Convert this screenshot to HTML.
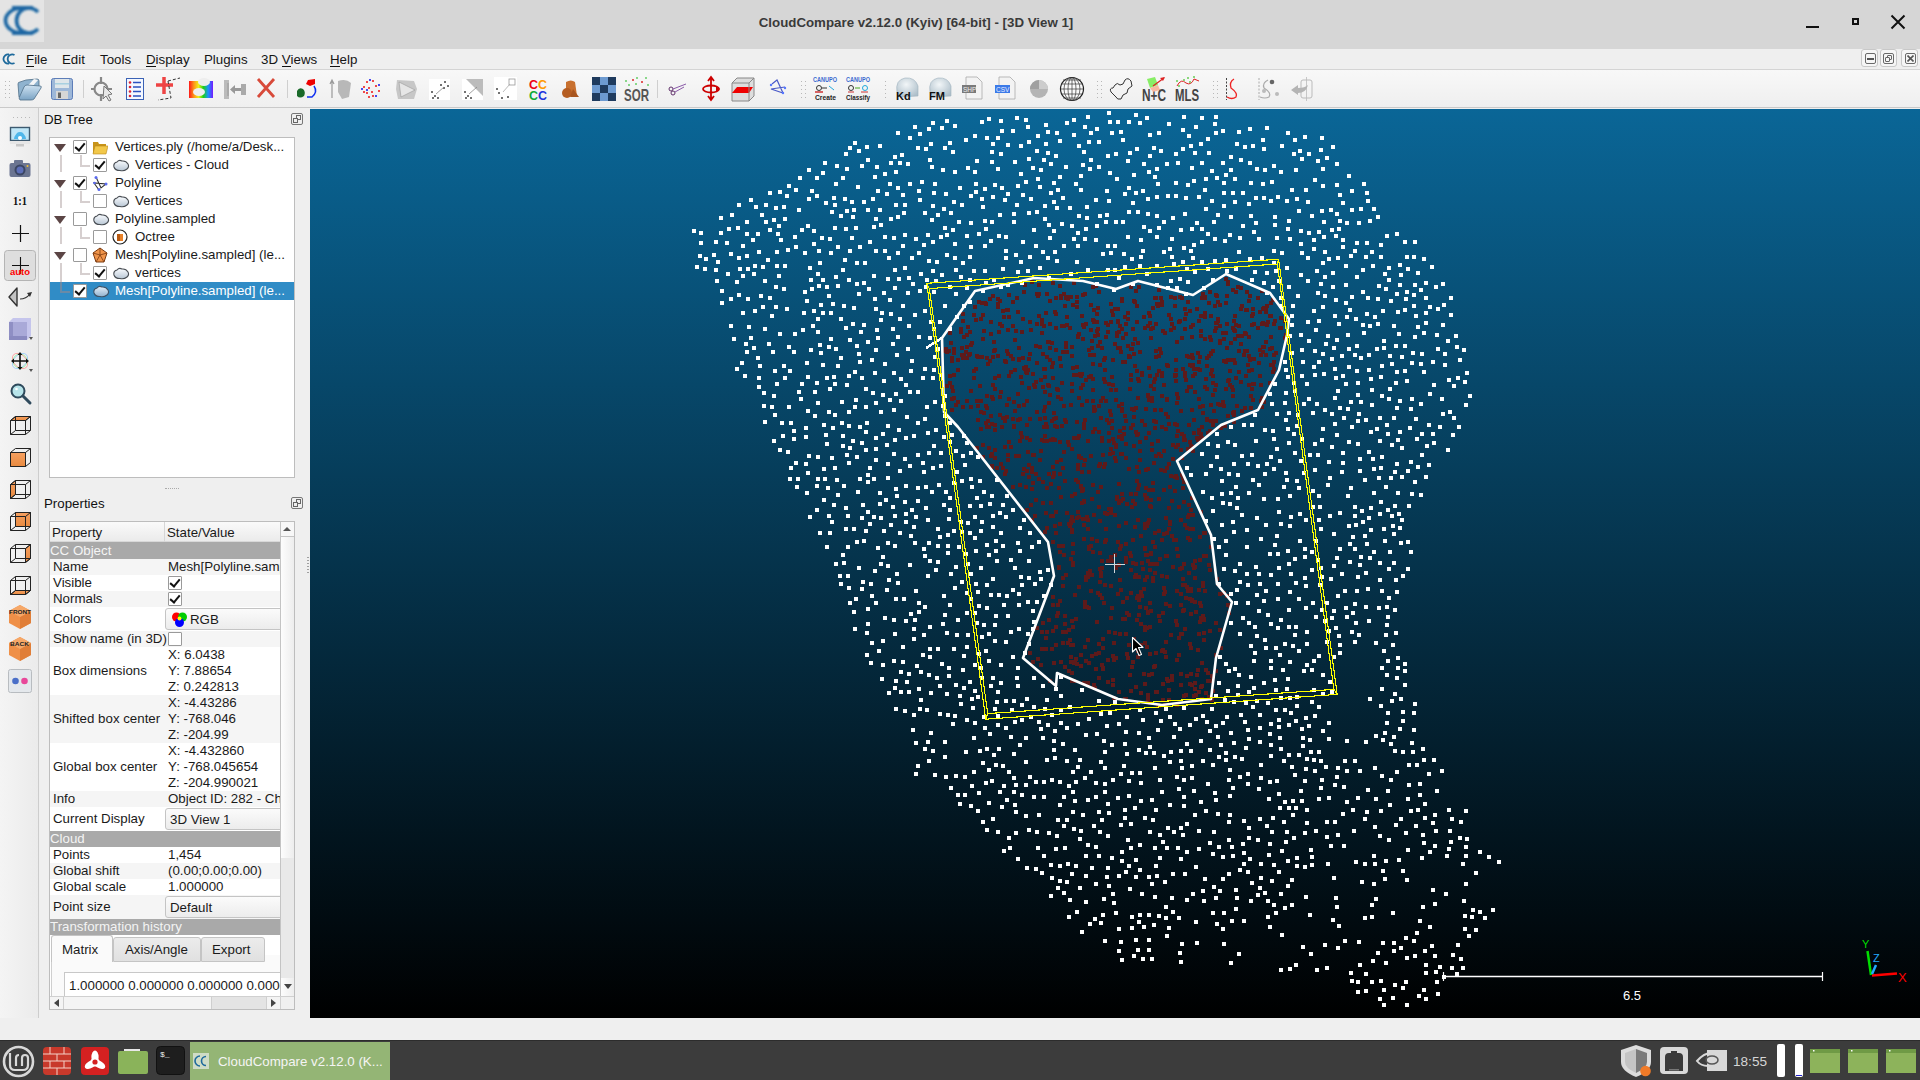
<!DOCTYPE html>
<html><head><meta charset="utf-8">
<style>
*{box-sizing:border-box;margin:0;padding:0}
html,body{width:1920px;height:1080px;overflow:hidden;background:#efefef;font-family:"Liberation Sans",sans-serif;font-size:13.3px;color:#1a1a1a}
div,span,svg{position:absolute}
#title{left:0;top:0;width:1920px;height:49px;background:#d6d6d6}
#ttext{left:0;width:1832px;top:15px;text-align:center;font-weight:bold;font-size:13.3px;color:#3a3a3a;letter-spacing:0}
#menubar{left:0;top:49px;width:1920px;height:21px;background:#efefef;border-bottom:1px solid #d4d4d4}
#menubar span{top:3px;color:#151515}
u{text-decoration:none;border-bottom:1px solid #111;line-height:12px;display:inline-block}
#toolbar{left:0;top:70px;width:1920px;height:38px;background:linear-gradient(#f8f8f8,#efefef);border-bottom:1px solid #c9c9c9}
#lefttb{left:0;top:108px;width:39px;height:910px;background:linear-gradient(90deg,#f4f4f4,#ebebeb);border-right:1px solid #cdcdcd}
#panel{left:40px;top:108px;width:270px;height:910px;background:#efefef}
#view{left:310px;top:109px;width:1610px;height:909px;background:linear-gradient(#0a6697,#000);overflow:hidden}
#status{left:0;top:1018px;width:1920px;height:22px;background:#efefef}
#taskbar{left:0;top:1040px;width:1920px;height:40px;background:#3c3c3c}
.tree{left:9px;top:29px;width:246px;height:341px;background:#fff;border:1px solid #bdbdbd}
.row{left:0;width:244px;height:18px;line-height:18px;white-space:nowrap}
.row span{top:0}
.cb{width:14px;height:14px;top:2px;border:1px solid #9a9a9a;background:#fff;border-radius:1px}
.cb.on::after{content:"";position:absolute;left:3px;top:0px;width:4px;height:8px;border:solid #111;border-width:0 2px 2px 0;transform:rotate(40deg)}
.exp{width:0;height:0;top:6px;border-left:6px solid transparent;border-right:6px solid transparent;border-top:8px solid #5b4545}
.vl{width:2px;background:#d6cfcf}
.ptable{left:9px;top:413px;width:246px;height:489px;background:#fff;border:1px solid #bdbdbd;overflow:hidden}
.pr{left:0;width:230px;height:16px;line-height:16px;white-space:nowrap;overflow:hidden}
.pr .k{left:3px;top:0}
.pr .v{left:118px;top:0}
.sec{background:#a9a9a9;color:#f4f4f4}
.alt{background:#f5f5f5}
.combo{left:115px;width:118px;border:1px solid #c4c4c4;border-radius:3px;background:linear-gradient(#fbfbfb,#ececec)}
</style></head><body>
<div id="title">
  <svg style="left:0;top:0" width="44" height="42" viewBox="0 0 44 42"><defs><filter id="bl"><feGaussianBlur stdDeviation="1"/></filter></defs><rect width="44" height="42" fill="#e4e4e4"/>
   <g filter="url(#bl)" fill="none" stroke="#1a66a3" stroke-width="3.6"><path d="M22 8A16.5 12.5 0 0 0 22 33"/><path d="M38 12Q34 8 28.5 8A12 12.5 0 0 0 28.5 33Q34 33 38 29"/><path d="M12 7.5H33" stroke-width="3"/><path d="M12 33.5H33" stroke-width="3"/></g></svg>
  <div id="ttext">CloudCompare v2.12.0 (Kyiv) [64-bit] - [3D View 1]</div>
  <div style="left:1806px;top:26px;width:13px;height:2px;background:#111"></div>
  <div style="left:1852px;top:18px;width:7px;height:7px;border:2px solid #111"></div>
  <svg style="left:1890px;top:14px" width="16" height="16"><path d="M1.5 1.5L14.5 14.5M14.5 1.5L1.5 14.5" stroke="#111" stroke-width="2"/></svg>
</div>
<div id="menubar">
  <svg style="left:2px;top:3px" width="14" height="14" viewBox="0 0 14 14"><path d="M7 2.5A4.6 4.6 0 1 0 7 11.5" fill="none" stroke="#1e6a9c" stroke-width="1.8"/><path d="M12.5 3A4.6 4.6 0 1 0 12.5 11" fill="none" stroke="#1e6a9c" stroke-width="1.8"/></svg>
  <span style="left:26px"><u>F</u>ile</span>
  <span style="left:62px">Edit</span>
  <span style="left:100px">Tools</span>
  <span style="left:146px"><u>D</u>isplay</span>
  <span style="left:204px">Plugins</span>
  <span style="left:261px">3D <u>V</u>iews</span>
  <span style="left:330px"><u>H</u>elp</span>
  <div style="left:1861px;top:0px;width:17px;height:18px;border:1px solid #c8c8c8;border-radius:3px;background:#f6f6f6"><div style="left:3px;top:3px;width:11px;height:11px;border:1.3px solid #6a6a6a;border-radius:2px"></div><div style="left:5px;top:8px;width:7px;height:1.6px;background:#555"></div></div>
  <div style="left:1880px;top:0px;width:17px;height:18px;border:1px solid #c8c8c8;border-radius:3px;background:#f6f6f6"><div style="left:2px;top:3px;width:11px;height:11px;border:1.3px solid #6a6a6a;border-radius:2px"></div><div style="left:6px;top:5px;width:5px;height:5px;border:1.2px solid #666;border-radius:1px"></div><div style="left:4px;top:7px;width:5px;height:5px;border:1.2px solid #666;background:#f6f6f6;border-radius:1px"></div></div>
  <div style="left:1901px;top:0px;width:17px;height:18px;border:1px solid #c8c8c8;border-radius:3px;background:#f6f6f6"><div style="left:3px;top:3px;width:11px;height:11px;border:1.3px solid #6a6a6a;border-radius:2px"></div><svg style="left:5px;top:5px" width="7" height="7"><path d="M0.5 0.5L6.5 6.5M6.5 0.5L0.5 6.5" stroke="#555" stroke-width="1.6"/></svg></div>
</div>
<div id="toolbar"><svg style="left:0;top:0" width="1920" height="38" viewBox="0 70 1920 38">
<defs>
<linearGradient id="rb" x1="0" y1="0" x2="1" y2="0"><stop offset="0" stop-color="#f00"/><stop offset=".2" stop-color="#f80"/><stop offset=".4" stop-color="#ee0"/><stop offset=".6" stop-color="#0c0"/><stop offset=".8" stop-color="#08f"/><stop offset="1" stop-color="#60f"/></linearGradient>
<linearGradient id="fold" x1="0" y1="0" x2="0" y2="1"><stop offset="0" stop-color="#cfe3f2"/><stop offset="1" stop-color="#7aa3c4"/></linearGradient>
<radialGradient id="rock" cx=".45" cy=".35" r=".7"><stop offset="0" stop-color="#f2f6f8"/><stop offset="1" stop-color="#aebfca"/></radialGradient>
<pattern id="grip" width="4" height="4" patternUnits="userSpaceOnUse"><rect x="1" y="1" width="1" height="1" fill="#b8b8b8"/></pattern>
</defs>
<!-- grips -->
<rect x="4" y="80" width="6" height="18" fill="url(#grip)"/>
<rect x="800" y="80" width="6" height="18" fill="url(#grip)"/>
<rect x="883" y="80" width="6" height="18" fill="url(#grip)"/>
<rect x="1097" y="80" width="6" height="18" fill="url(#grip)"/>
<rect x="1212" y="80" width="6" height="18" fill="url(#grip)"/>
<!-- separators -->
<rect x="83" y="80" width="1" height="18" fill="#cfcfcf"/>
<rect x="287" y="80" width="1" height="18" fill="#cfcfcf"/>
<rect x="657" y="80" width="1" height="18" fill="#cfcfcf"/>
<!-- open folder -->
<path d="M19 97L18 84Q18 82 20 82L26 80L37 79Q39 79 39 81L39 86Z" fill="#8fb3cf" stroke="#4f6f88" stroke-width=".8"/>
<path d="M22 92L34 79L38 80L26 94Z" fill="#f4f6f8"/>
<path d="M19 98L24 87Q25 85 27 85L40 86Q42 86 41 88L34 99Q33 100 31 100L20 100Z" fill="url(#fold)" stroke="#4f6f88" stroke-width=".8"/>
<!-- floppy -->
<rect x="51.5" y="78.5" width="21" height="21" rx="2" fill="#9db7d8" stroke="#5d7db8"/>
<rect x="55" y="79" width="14" height="9" fill="#dfe6ea"/><rect x="55" y="83" width="14" height="1.5" fill="#a8d0e0"/>
<rect x="56" y="91" width="12" height="8" fill="#d6d6d6"/>
<rect x="58" y="92.5" width="3" height="5.5" fill="#666"/>
<!-- pick -->
<circle cx="101" cy="89" r="6.5" fill="none" stroke="#888" stroke-width="2.2"/>
<path d="M101 77V84M101 94V101M91 89H95M107 89H112" stroke="#888" stroke-width="2.2"/>
<path d="M104 86 L112 94 L108 95 L111 100 L109 101 L106 96 L103 99 Z" fill="#e8e8e8" stroke="#777" stroke-width="1"/>
<!-- list -->
<rect x="126.5" y="78.5" width="17" height="21" fill="#f4f8ff" stroke="#3b62b5"/>
<g fill="#d23"><circle cx="130" cy="82.5" r="1.3"/><circle cx="130" cy="87" r="1.3"/><circle cx="130" cy="91.5" r="1.3"/><circle cx="130" cy="96" r="1.3"/></g>
<g stroke="#2a52c0" stroke-width="1.4"><path d="M133 82.5H141M133 87H141M133 91.5H141M133 96H141"/></g>
<!-- add point -->
<path d="M164 77V94M156 85H173" stroke="#ee4444" stroke-width="3.5"/>
<path d="M168 81L180 78M168 81L171 98L158 100" fill="none" stroke="#333" stroke-width="1" stroke-dasharray="3 2"/>
<!-- sheep rainbow -->
<rect x="189" y="81" width="24" height="17" fill="url(#rb)" opacity=".9"/>
<ellipse cx="204" cy="82" rx="6" ry="4" fill="#eee"/><ellipse cx="199" cy="92" rx="6" ry="4" fill="#eee"/>
<!-- gray arrow -->
<path d="M224 80H229V99H224Z M241 84H246V95H241Z" fill="#aaa"/>
<path d="M230 89.5L235 85V88H241V91H235V94Z" fill="#999"/>
<path d="M224 80H229V83H227V96H229V99H224Z" fill="#bbb"/>
<!-- red X -->
<path d="M258 79L274 97M274 79L258 97" stroke="#d84a3a" stroke-width="2.8"/>
<!-- color transfer -->
<path d="M308 80L315 79L315 84L310 86L306 84Z" fill="#e00"/>
<path d="M297 91Q299 87 303 89Q306 92 304 96Q300 99 297 96Z" fill="#1a6a2a"/>
<path d="M314 86Q318 92 312 97L307 97" fill="none" stroke="#1030f0" stroke-width="1.5"/>
<!-- gray arrow shape -->
<path d="M332 98V81M330 84L332 80L334 84" stroke="#999" stroke-width="1.2" fill="none"/>
<path d="M338 81Q346 78 351 83L349 97L342 99L338 92Z" fill="#b8b8b8"/>
<!-- red blue dots circle -->
<g fill="#e11"><circle cx="367" cy="82" r="1"/><circle cx="373" cy="81" r="1"/><circle cx="364" cy="87" r="1"/><circle cx="369" cy="88" r="1"/><circle cx="376" cy="86" r="1"/><circle cx="364" cy="92" r="1"/><circle cx="372" cy="92" r="1"/><circle cx="379" cy="91" r="1"/><circle cx="369" cy="97" r="1"/><circle cx="373" cy="96" r="1"/><circle cx="367" cy="93" r="1"/></g>
<g fill="#11e"><circle cx="370" cy="80" r="1"/><circle cx="379" cy="85" r="1"/><circle cx="367" cy="90" r="1"/><circle cx="376" cy="96" r="1"/><circle cx="362" cy="89" r="1"/></g>
<!-- gray triangle mesh -->
<path d="M397 80L414 81L417 89L414 99L398 99L396 89Z" fill="#c7c7c7"/>
<path d="M399 82L415 90L401 97Z" fill="#e6e6e6" stroke="#999" stroke-width=".6"/>
<!-- dots boxes -->
<rect x="429" y="79" width="21" height="21" fill="#fff"/>
<g fill="#444"><circle cx="432" cy="92" r="1"/><circle cx="435" cy="96" r="1"/><circle cx="433" cy="98" r="1"/><circle cx="438" cy="98" r="1"/><circle cx="445" cy="82" r="1"/><circle cx="448" cy="86" r="1"/><circle cx="444" cy="88" r="1"/><circle cx="441" cy="85" r="1"/></g>
<path d="M436 94L444 87" stroke="#888" stroke-width=".8"/>
<rect x="462" y="79" width="21" height="21" fill="#fff"/>
<path d="M466 79H483V96Z" fill="#bcbcbc"/>
<g fill="#444"><circle cx="465" cy="92" r="1"/><circle cx="468" cy="96" r="1"/><circle cx="466" cy="98" r="1"/><circle cx="471" cy="98" r="1"/></g>
<path d="M469 94L477 87" stroke="#888" stroke-width=".8"/>
<rect x="494" y="77" width="23" height="23" fill="#fff"/>
<g fill="#444"><circle cx="497" cy="89" r="1"/><circle cx="499" cy="93" r="1"/><circle cx="502" cy="98" r="1"/><circle cx="508" cy="97" r="1"/></g>
<rect x="509" y="79" width="6" height="6" fill="none" stroke="#999" stroke-width=".8"/>
<path d="M503 92L510 84" stroke="#aaa" stroke-width=".8"/>
<!-- CC CC -->
<text x="529" y="88.5" font-family="Liberation Sans" font-weight="bold" font-size="12.5" fill="#e01" textLength="18" lengthAdjust="spacingAndGlyphs"><tspan>C</tspan><tspan fill="#f90">C</tspan></text>
<text x="529" y="99.5" font-family="Liberation Sans" font-weight="bold" font-size="12.5" fill="#1a3" textLength="18" lengthAdjust="spacingAndGlyphs"><tspan>C</tspan><tspan fill="#23d">C</tspan></text>
<!-- brown shapes -->
<path d="M566 82Q571 79 575 82L577 96L566 96Z" fill="#c8702f"/>
<circle cx="567" cy="93" r="5" fill="#b55d22"/>
<path d="M573 89L579 97L570 97Z" fill="#a8561f"/>
<!-- checker -->
<rect x="592" y="77" width="24" height="24" fill="#6d9ad0"/>
<path d="M592 77h8v8h-8zM608 77h8v8h-8zM600 85h8v8h-8zM592 93h8v8h-8zM608 93h8v8h-8z" fill="#1f3b5e"/>
<!-- SOR -->
<text x="624" y="101" font-family="Liberation Sans" font-weight="bold" font-size="17" fill="#555" textLength="25" lengthAdjust="spacingAndGlyphs">SOR</text>
<g fill="#6c6"><circle cx="626" cy="81" r="1"/><circle cx="637" cy="78" r="1"/><circle cx="646" cy="78" r="1"/><circle cx="648" cy="85" r="1"/><circle cx="629" cy="85" r="1"/><circle cx="636" cy="84" r="1"/></g>
<path d="M632 79l2 2m0-2l-2 2M641 81l2 2m0-2l-2 2" stroke="#d33" stroke-width=".8"/>
<!-- scissors -->
<circle cx="671" cy="89" r="2" fill="none" stroke="#60306a" stroke-width="1"/><circle cx="673" cy="93" r="2" fill="none" stroke="#60306a" stroke-width="1"/>
<path d="M673 89L686 84M675 92L684 87" stroke="#8a5aa8" stroke-width="1"/>
<!-- red rotate -->
<path d="M711 78V99M708 81L711 77L714 81M708 96L711 100L714 96" fill="none" stroke="#c00" stroke-width="1.8"/>
<ellipse cx="711" cy="89" rx="8" ry="3.5" fill="none" stroke="#c00" stroke-width="1.8"/>
<path d="M716 86L720 89L716 92Z" fill="#c00"/>
<!-- box with red plane -->
<path d="M732 83L737 78H754V96L749 101H732Z" fill="#ddd" stroke="#888" stroke-width="1"/>
<path d="M732 93L737 87H753L749 93Z" fill="#e00"/>
<path d="M732 83H749V101M749 83L754 78" fill="none" stroke="#888" stroke-width="1"/>
<!-- polyline -->
<path d="M772 84L777 80L783 93L771 89L785 87" fill="none" stroke="#4a5ac8" stroke-width="1.2"/>
<g fill="#57f"><circle cx="771" cy="85" r="1.2"/><circle cx="783" cy="93" r="1.2"/><circle cx="785" cy="88" r="1.2"/></g>
<!-- canupo -->
<text x="813" y="82" font-family="Liberation Sans" font-weight="bold" font-size="6.5" fill="#3a6ad0" textLength="24" lengthAdjust="spacingAndGlyphs">CANUPO</text>
<text x="815" y="100" font-family="Liberation Sans" font-weight="bold" font-size="8" fill="#222" textLength="21" lengthAdjust="spacingAndGlyphs">Create</text>
<circle cx="819" cy="88" r="2.5" fill="none" stroke="#333"/><path d="M822 88h5" stroke="#333"/><path d="M829 86l5 4" stroke="#2ad"/><path d="M815 92h8" stroke="#c33" stroke-width="1.5"/>
<text x="846" y="82" font-family="Liberation Sans" font-weight="bold" font-size="6.5" fill="#3a6ad0" textLength="24" lengthAdjust="spacingAndGlyphs">CANUPO</text>
<text x="846" y="100" font-family="Liberation Sans" font-weight="bold" font-size="8" fill="#222" textLength="24" lengthAdjust="spacingAndGlyphs">Classify</text>
<circle cx="851" cy="88" r="2.5" fill="none" stroke="#333"/><path d="M855 88h5" stroke="#4a2"/><circle cx="865" cy="88" r="2.5" fill="none" stroke="#2ad"/><path d="M848 92h6M861 92h7" stroke="#c33" stroke-width="1"/>
<!-- Kd FM rocks -->
<path d="M897 92Q895 80 905 78Q915 77 918 86L918 96L900 97Z" fill="url(#rock)" stroke="#9fb2bd" stroke-width=".6"/>
<text x="896" y="100" font-family="Liberation Sans" font-weight="bold" font-size="11" fill="#111">Kd</text>
<path d="M930 92Q928 80 938 78Q948 77 951 86L951 96L933 97Z" fill="url(#rock)" stroke="#9fb2bd" stroke-width=".6"/>
<text x="929" y="100" font-family="Liberation Sans" font-weight="bold" font-size="11" fill="#111">FM</text>
<!-- SHP CSV docs -->
<path d="M966 77H977L982 82V99H966Z" fill="#f3f3f3" stroke="#aaa" stroke-width=".8"/>
<rect x="962" y="85" width="14" height="8" fill="#7a7a7a"/><text x="963" y="92" font-family="Liberation Sans" font-size="6.5" fill="#eee">SHP</text>
<path d="M999 77H1010L1015 82V99H999Z" fill="#f3f3f3" stroke="#aaa" stroke-width=".8"/>
<rect x="995" y="85" width="15" height="8" fill="#3b7ae8"/><text x="996" y="92" font-family="Liberation Sans" font-size="6.5" fill="#eef">CSV</text>
<!-- gray circle -->
<circle cx="1039" cy="89" r="9" fill="#b4b4b4"/><path d="M1039 89L1039 80A9 9 0 0 1 1048 89Z" fill="#ccc"/><path d="M1039 89L1030 89A9 9 0 0 1 1039 80Z" fill="#a0a0a0"/>
<!-- globe -->
<circle cx="1072" cy="89" r="11.5" fill="#fafafa" stroke="#222" stroke-width="1.2"/>
<g fill="none" stroke="#333" stroke-width=".7"><ellipse cx="1072" cy="89" rx="4" ry="11.5"/><ellipse cx="1072" cy="89" rx="8" ry="11.5"/><path d="M1061 84H1083M1061 89H1083M1061 94H1083M1063 80H1081M1063 98H1081M1072 77.5V100.5"/></g>
<!-- puzzle -->
<path d="M1111 92Q1109 88 1113 88L1115 85Q1117 82 1120 85L1123 84L1125 80Q1128 77 1131 81L1132 86L1128 89L1127 93L1123 95L1121 99Q1117 100 1116 97Z" fill="none" stroke="#333" stroke-width="1"/>
<!-- N+C -->
<path d="M1147 79L1155 77L1158 85L1150 88Z" fill="#8e6"/><path d="M1150 88L1158 85L1160 90L1153 92Z" fill="#f8b8a0"/>
<path d="M1153 86L1164 78" stroke="#d22" stroke-width="1.2"/><path d="M1165 77L1160 78L1163 81Z" fill="#d22"/>
<text x="1142" y="101" font-family="Liberation Sans" font-weight="bold" font-size="16" fill="#444" textLength="24" lengthAdjust="spacingAndGlyphs">N+C</text>
<!-- MLS -->
<path d="M1177 86Q1181 78 1186 83Q1191 86 1194 79L1199 81" fill="none" stroke="#d22" stroke-width="1"/>
<g fill="#6c5"><circle cx="1177" cy="81" r="1"/><circle cx="1184" cy="80" r="1"/><circle cx="1188" cy="78" r="1"/><circle cx="1194" cy="77" r="1"/><circle cx="1179" cy="86" r="1"/><circle cx="1190" cy="82" r="1"/></g>
<text x="1175" y="101" font-family="Liberation Sans" font-weight="bold" font-size="16" fill="#444" textLength="24" lengthAdjust="spacingAndGlyphs">MLS</text>
<!-- red S -->
<path d="M1226.5 78V100" stroke="#444" stroke-width="1" stroke-dasharray="2 1.5"/>
<path d="M1234 79Q1229 82 1231 88Q1238 93 1236 97Q1232 100 1227 97" fill="none" stroke="#e22" stroke-width="1.3"/>
<!-- gray S dots -->
<path d="M1259 78V100" stroke="#aaa" stroke-width="1" stroke-dasharray="2 1.5"/>
<path d="M1268 80Q1262 83 1264 88Q1272 93 1269 97Q1265 99 1260 97" fill="none" stroke="#aaa" stroke-width="1.2"/>
<circle cx="1272" cy="82" r="2.3" fill="#666"/><circle cx="1264" cy="91" r="2" fill="#bbb"/><circle cx="1277" cy="94" r="2" fill="#bbb"/>
<!-- gray arrow cylinder -->
<rect x="1301" y="80" width="11" height="18" rx="2" fill="none" stroke="#bbb" stroke-width="1"/>
<path d="M1306.5 77V101" stroke="#bbb" stroke-width=".8"/>
<path d="M1291 90L1298 85V88Q1305 88 1308 85Q1306 93 1298 93V95Z" fill="#b4b4b4"/>
</svg>
</div>
<div id="lefttb"><svg style="left:0;top:0" width="39" height="910" viewBox="0 108 39 910">
<defs>
<linearGradient id="org" x1="0" y1="0" x2="0" y2="1"><stop offset="0" stop-color="#f6a060"/><stop offset="1" stop-color="#e88a40"/></linearGradient>
<pattern id="grip2" width="4" height="4" patternUnits="userSpaceOnUse"><rect x="1" y="1" width="1" height="1" fill="#b8b8b8"/></pattern>
</defs>
<rect x="12" y="114" width="18" height="5" fill="url(#grip2)"/>
<!-- monitor -->
<rect x="10.5" y="127.5" width="19" height="13" fill="#bfe6f7" stroke="#3d5a70" stroke-width="1.4"/>
<path d="M14 139A6 6 0 0 1 26 139Z" fill="#4fb7ea"/><circle cx="20" cy="136" r="4" fill="#4fb7ea"/><circle cx="20" cy="138" r="2" fill="#fff"/>
<rect x="10" y="141" width="20" height="3" fill="#e6e6e6"/><rect x="16" y="144" width="8" height="2.5" fill="#c8c8c8"/>
<!-- camera -->
<rect x="9.5" y="163" width="21" height="14" rx="2" fill="#6b7591"/><rect x="14" y="160" width="9" height="4" rx="1" fill="#6b7591"/>
<circle cx="20" cy="170" r="5.5" fill="#3b4663"/><circle cx="20" cy="170" r="3.5" fill="#5d6fb8"/><circle cx="27.5" cy="166" r="1" fill="#f4c030"/>
<!-- 1:1 -->
<text x="13" y="204.5" font-family="Liberation Serif" font-weight="bold" font-size="11.5" fill="#111" textLength="14" lengthAdjust="spacingAndGlyphs">1:1</text>
<!-- crosshair -->
<path d="M20.5 225V242M12 233.5H29" stroke="#111" stroke-width="1.2"/>
<!-- auto button -->
<rect x="4.5" y="250.5" width="31" height="30" rx="3" fill="#dedede" stroke="#b4b4b4"/>
<path d="M20.5 257V274M12 265.5H29" stroke="#111" stroke-width="1.1"/>
<text x="10" y="275" font-family="Liberation Sans" font-weight="bold" font-size="9.5" fill="#f00" textLength="20" lengthAdjust="spacingAndGlyphs">auto</text>
<!-- triangle arrow -->
<path d="M17 288L9 297L17 306Z" fill="#c4c4c4" stroke="#333" stroke-width="1.4" stroke-linejoin="round"/>
<path d="M20 299Q26 299 30 294" fill="none" stroke="#333" stroke-width="1.2"/><path d="M32 292L27 293L30 297Z" fill="#333"/>
<!-- purple cube -->
<path d="M9 322L13 318H31V336L27 340H9Z" fill="#c5c5ec"/><path d="M9 322H27V340H9Z" fill="#a9a9d8"/><path d="M9 322H13V340H9Z" fill="#8f8fc4"/><path d="M9 336H27V340H9Z" fill="#8a8ac0"/>
<path d="M29 337h4l-2 3z" fill="#555"/>
<!-- move rings -->
<g fill="none" stroke-width=".8"><ellipse cx="20" cy="361" rx="9" ry="6" stroke="#f99" transform="rotate(45 20 361)"/><ellipse cx="20" cy="361" rx="9" ry="6" stroke="#9cf" transform="rotate(-45 20 361)"/><circle cx="20" cy="361" r="7" stroke="#9e9"/></g>
<path d="M20 353V369M12 361H28" stroke="#111" stroke-width="1.6"/><path d="M20 352l-2.5 3h5zM20 370l-2.5-3h5zM11 361l3-2.5v5zM29 361l-3-2.5v5z" fill="#111"/>
<path d="M29 369h4l-2 3z" fill="#555"/>
<!-- magnifier -->
<circle cx="18" cy="391" r="6.5" fill="#b7e4ea" stroke="#2f4a5c" stroke-width="2"/><path d="M23 396L30 403" stroke="#2f4a5c" stroke-width="3" stroke-linecap="round"/><circle cx="16.5" cy="389" r="1.3" fill="#fff"/>
<!-- cubes -->
<g stroke="#222" stroke-width="1" fill="none">
 <g transform="translate(10.5 416.5)"><path d="M5 0H20L15 4H0Z" fill="url(#org)"/><path d="M0 4H15V18H0ZM5 0H20V14H5ZM0 4L5 0M15 4L20 0M15 18L20 14M0 18L5 14"/></g>
 <g transform="translate(10.5 448.5)"><path d="M0 4H15V18H0Z" fill="url(#org)"/><path d="M0 4H15V18H0ZM0 4L5 0H20V14L15 18M15 4L20 0"/></g>
 <g transform="translate(10.5 480.5)"><path d="M0 4L5 0V14L0 18Z" fill="url(#org)"/><path d="M0 4H15V18H0ZM5 0H20V14H5ZM0 4L5 0M15 4L20 0M15 18L20 14M0 18L5 14"/></g>
 <g transform="translate(10.5 512.5)"><path d="M5 0H20V14H5Z" fill="url(#org)"/><path d="M0 4H15V18H0ZM5 0H20V14H5ZM0 4L5 0M15 4L20 0M15 18L20 14M0 18L5 14"/></g>
 <g transform="translate(10.5 544.5)"><path d="M15 4L20 0V14L15 18Z" fill="url(#org)"/><path d="M0 4H15V18H0ZM5 0H20V14H5ZM0 4L5 0M15 4L20 0M15 18L20 14M0 18L5 14"/></g>
 <g transform="translate(10.5 576.5)"><path d="M0 18L5 14H20L15 18Z" fill="url(#org)"/><path d="M0 4H15V18H0ZM5 0H20V14H5ZM0 4L5 0M15 4L20 0M15 18L20 14M0 18L5 14"/></g>
</g>
<!-- FRONT / BACK -->
<path d="M20 605L31 611V623L20 629L9 623V611Z" fill="#ef9048"/><path d="M20 617L31 611V623L20 629Z" fill="#e07e38"/><path d="M9 611L20 605L31 611L20 617Z" fill="#f6a868"/>
<text x="9" y="614" font-family="Liberation Sans" font-weight="bold" font-size="5.8" fill="#222" textLength="22" lengthAdjust="spacingAndGlyphs">FRONT</text>
<path d="M20 637L31 643V655L20 661L9 655V643Z" fill="#ef9048"/><path d="M20 649L31 643V655L20 661Z" fill="#e07e38"/><path d="M9 643L20 637L31 643L20 649Z" fill="#f6a868"/>
<text x="10" y="646" font-family="Liberation Sans" font-weight="bold" font-size="6" fill="#222" textLength="19" lengthAdjust="spacingAndGlyphs">BACK</text>
<!-- dots button -->
<rect x="8.5" y="669.5" width="23" height="23" rx="2" fill="#e4e8ec" stroke="#b8bcc0"/>
<circle cx="15.5" cy="681" r="3.3" fill="#4a6fc8"/><circle cx="24.5" cy="681" r="3.3" fill="#e8489a"/>
</svg>
</div>
<div id="panel"><svg width="0" height="0" style="left:0;top:0"><defs><linearGradient id="cl" x1="0" y1="0" x2="0" y2="1"><stop offset="0" stop-color="#fafcff"/><stop offset="1" stop-color="#b8c6d4"/></linearGradient><linearGradient id="cl2" x1="0" y1="0" x2="0" y2="1"><stop offset="0" stop-color="#e6f0fa"/><stop offset="1" stop-color="#8fb0cc"/></linearGradient></defs></svg>
<span style="left:4px;top:4px;color:#111">DB Tree</span>
<div style="left:251px;top:5px;width:12px;height:12px;border:1px solid #777;border-radius:2px"><div style="left:4px;top:1px;width:5px;height:5px;border:1px solid #666"></div><div style="left:1px;top:4px;width:5px;height:5px;border:1px solid #666;background:#efefef"></div></div>
<div class="tree">
 <!-- branch lines -->
 <div class="vl" style="left:10px;top:17px;height:17px"></div><div class="vl" style="left:30px;top:17px;height:10px"></div><div style="left:30px;top:27px;width:10px;height:2px;background:#d6cfcf"></div>
 <div class="vl" style="left:10px;top:53px;height:17px"></div><div class="vl" style="left:30px;top:53px;height:10px"></div><div style="left:30px;top:63px;width:10px;height:2px;background:#d6cfcf"></div>
 <div class="vl" style="left:10px;top:89px;height:17px"></div><div class="vl" style="left:30px;top:89px;height:10px"></div><div style="left:30px;top:99px;width:10px;height:2px;background:#d6cfcf"></div>
 <div class="vl" style="left:30px;top:125px;height:10px"></div><div style="left:30px;top:135px;width:10px;height:2px;background:#d6cfcf"></div>

 <div class="row" style="top:0"><div class="exp" style="left:4px"></div><div class="cb on" style="left:23px"></div>
   <svg style="left:42px;top:1px" width="16" height="16" viewBox="0 0 16 16"><path d="M1 3h5l1 2h7v9H1z" fill="#c8941a"/><path d="M3 7h13l-2 8H1z" fill="#f2c84a" stroke="#b8861a" stroke-width=".6"/></svg>
   <span style="left:65px">Vertices.ply (/home/a/Desk...</span></div>
 <div class="row" style="top:18px"><div class="cb on" style="left:43px"></div>
   <svg style="left:62px;top:2px" width="18" height="14" viewBox="0 0 18 14"><path d="M2 9Q1 5 5 4Q7 1.5 10 3Q14 2.5 16 6Q17.5 9 15 11Q12 13.5 8 12.5Q3 12.5 2 9Z" fill="url(#cl)" stroke="#4a4f55" stroke-width="1.1"/></svg>
   <span style="left:85px">Vertices - Cloud</span></div>
 <div class="row" style="top:36px"><div class="exp" style="left:4px"></div><div class="cb on" style="left:23px"></div>
   <svg style="left:42px;top:1px" width="16" height="16" viewBox="0 0 16 16"><path d="M4 2L9 13L14 9L2 8L7 15" fill="none" stroke="#333" stroke-width="1.1"/><g fill="#5a6af0"><circle cx="4" cy="2.5" r="1.5"/><circle cx="14" cy="9" r="1.5"/><circle cx="7" cy="14.5" r="1.5"/><circle cx="2.5" cy="8" r="1.3"/></g></svg>
   <span style="left:65px">Polyline</span></div>
 <div class="row" style="top:54px"><div class="cb" style="left:43px"></div>
   <svg style="left:62px;top:2px" width="18" height="14" viewBox="0 0 18 14"><path d="M2 9Q1 5 5 4Q7 1.5 10 3Q14 2.5 16 6Q17.5 9 15 11Q12 13.5 8 12.5Q3 12.5 2 9Z" fill="url(#cl)" stroke="#4a4f55" stroke-width="1.1"/></svg>
   <span style="left:85px">Vertices</span></div>
 <div class="row" style="top:72px"><div class="exp" style="left:4px"></div><div class="cb" style="left:23px"></div>
   <svg style="left:42px;top:2px" width="18" height="14" viewBox="0 0 18 14"><path d="M2 9Q1 5 5 4Q7 1.5 10 3Q14 2.5 16 6Q17.5 9 15 11Q12 13.5 8 12.5Q3 12.5 2 9Z" fill="url(#cl)" stroke="#4a4f55" stroke-width="1.1"/></svg>
   <span style="left:65px">Polyline.sampled</span></div>
 <div class="row" style="top:90px"><div class="cb" style="left:43px"></div>
   <svg style="left:62px;top:1px" width="16" height="16" viewBox="0 0 16 16"><circle cx="8" cy="8" r="7" fill="#fff" stroke="#222" stroke-width="1.2"/><path d="M5 5h6v7H5z" fill="#e8822a"/><path d="M5 5h3v7H5z" fill="#b85a12"/></svg>
   <span style="left:85px">Octree</span></div>
 <div class="row" style="top:108px"><div class="exp" style="left:4px"></div><div class="cb" style="left:23px"></div>
   <svg style="left:42px;top:1px" width="16" height="16" viewBox="0 0 16 16"><path d="M8 1L15 6L12 15H4L1 6Z" fill="#f0944a" stroke="#7a3a10" stroke-width="1"/><path d="M8 1L8 8L15 6M8 8L12 15M8 8L4 15M8 8L1 6" fill="none" stroke="#7a3a10" stroke-width="0.8"/></svg>
   <span style="left:65px">Mesh[Polyline.sampled] (le...</span></div>
 <div class="row" style="top:126px"><div class="cb on" style="left:43px"></div>
   <svg style="left:62px;top:2px" width="18" height="14" viewBox="0 0 18 14"><path d="M2 9Q1 5 5 4Q7 1.5 10 3Q14 2.5 16 6Q17.5 9 15 11Q12 13.5 8 12.5Q3 12.5 2 9Z" fill="url(#cl)" stroke="#4a4f55" stroke-width="1.1"/></svg>
   <span style="left:85px">vertices</span></div>
 <div class="row" style="top:144px;background:#308cc6;color:#fff"><div class="cb on" style="left:23px"></div>
   <svg style="left:42px;top:2px" width="18" height="14" viewBox="0 0 18 14"><path d="M2 9Q1 5 5 4Q7 1.5 10 3Q14 2.5 16 6Q17.5 9 15 11Q12 13.5 8 12.5Q3 12.5 2 9Z" fill="url(#cl2)" stroke="#3f5468" stroke-width="1.1"/></svg>
   <span style="left:65px">Mesh[Polyline.sampled] (le...</span></div>
 <div class="vl" style="left:10px;top:125px;height:28px"></div><div style="left:10px;top:153px;width:10px;height:2px;background:#6a8aa6"></div><div style="left:10px;top:144px;width:2px;height:10px;background:#6a8aa6"></div>
</div>
<div style="left:125px;top:380px;width:14px;height:2px;border-top:1px dotted #aaa"></div>
<span style="left:4px;top:388px;color:#111">Properties</span>
<div style="left:251px;top:389px;width:12px;height:12px;border:1px solid #777;border-radius:2px"><div style="left:4px;top:1px;width:5px;height:5px;border:1px solid #666"></div><div style="left:1px;top:4px;width:5px;height:5px;border:1px solid #666;background:#efefef"></div></div>
<div class="ptable">
 <div style="left:0;top:0;width:230px;height:20px;background:linear-gradient(#fafafa,#ebebeb);border-bottom:1px solid #d8d8d8"><span style="left:2px;top:3px">Property</span><div style="left:114px;top:0;width:1px;height:20px;background:#d6d6d6"></div><span style="left:117px;top:3px">State/Value</span></div>
 <div class="pr sec" style="top:20px;height:17px"><span class="k" style="left:0;top:1px">CC Object</span></div>
 <div class="pr alt" style="top:37px"><span class="k">Name</span><span class="v">Mesh[Polyline.sampled] (le</span></div>
 <div class="pr" style="top:53px"><span class="k">Visible</span><div class="cb on" style="left:118px;top:1px"></div></div>
 <div class="pr alt" style="top:69px"><span class="k">Normals</span><div class="cb on" style="left:118px;top:1px"></div></div>
 <div class="pr" style="top:85px;height:24px"><span class="k" style="top:4px">Colors</span><div class="combo" style="top:1px;height:22px"><svg style="left:5px;top:2px" width="17" height="17" viewBox="0 0 17 17"><circle cx="5.5" cy="6" r="4.5" fill="#f00"/><circle cx="11.5" cy="6" r="4.5" fill="#0c0" style="mix-blend-mode:normal"/><circle cx="8.5" cy="11.5" r="4.5" fill="#00f"/><circle cx="8.5" cy="7.5" r="2" fill="#ff0"/></svg><span style="left:24px;top:3px">RGB</span></div></div>
 <div class="pr alt" style="top:109px"><span class="k">Show name (in 3D)</span><div class="cb" style="left:118px;top:1px"></div></div>
 <div class="pr" style="top:125px;height:48px"><span class="k" style="top:16px">Box dimensions</span><span class="v" style="top:0">X: 6.0438</span><span class="v" style="top:16px">Y: 7.88654</span><span class="v" style="top:32px">Z: 0.242813</span></div>
 <div class="pr alt" style="top:173px;height:48px"><span class="k" style="top:16px">Shifted box center</span><span class="v" style="top:0">X: -4.43286</span><span class="v" style="top:16px">Y: -768.046</span><span class="v" style="top:32px">Z: -204.99</span></div>
 <div class="pr" style="top:221px;height:48px"><span class="k" style="top:16px">Global box center</span><span class="v" style="top:0">X: -4.432860</span><span class="v" style="top:16px">Y: -768.045654</span><span class="v" style="top:32px">Z: -204.990021</span></div>
 <div class="pr alt" style="top:269px"><span class="k">Info</span><span class="v">Object ID: 282 - Children: 1</span></div>
 <div class="pr" style="top:285px;height:24px"><span class="k" style="top:4px">Current Display</span><div class="combo" style="top:1px;height:22px"><span style="left:4px;top:3px">3D View 1</span></div></div>
 <div class="pr sec" style="top:309px"><span class="k" style="left:0">Cloud</span></div>
 <div class="pr" style="top:325px"><span class="k">Points</span><span class="v">1,454</span></div>
 <div class="pr alt" style="top:341px"><span class="k">Global shift</span><span class="v">(0.00;0.00;0.00)</span></div>
 <div class="pr" style="top:357px"><span class="k">Global scale</span><span class="v">1.000000</span></div>
 <div class="pr alt" style="top:373px;height:24px"><span class="k" style="top:4px">Point size</span><div class="combo" style="top:1px;height:22px"><span style="left:4px;top:3px">Default</span></div></div>
 <div class="pr sec" style="top:397px"><span class="k" style="left:0">Transformation history</span></div>
 <!-- tabs -->
 <div style="left:1px;top:433px;width:229px;height:41px;background:#fafafa;border-left:1px solid #cfcfcf"></div>
 <div style="left:63px;top:415px;width:88px;height:25px;background:linear-gradient(#ececec,#e0e0e0);border:1px solid #c4c4c4;border-radius:3px 3px 0 0"><span style="left:11px;top:4px">Axis/Angle</span></div>
 <div style="left:151px;top:415px;width:64px;height:25px;background:linear-gradient(#ececec,#e0e0e0);border:1px solid #c4c4c4;border-radius:3px 3px 0 0"><span style="left:10px;top:4px">Export</span></div>
 <div style="left:1px;top:413px;width:62px;height:27px;background:#fafafa;border:1px solid #c4c4c4;border-bottom:none;border-radius:3px 3px 0 0"><span style="left:10px;top:6px">Matrix</span></div>
 <div style="left:14px;top:450px;width:220px;height:25px;background:#fff;border:1px solid #c8c8c8"><span style="left:4px;top:5px;white-space:nowrap">1.000000 0.000000 0.000000 0.000000</span></div>
 <!-- vertical scrollbar -->
 <div style="left:230px;top:0;width:15px;height:474px;background:linear-gradient(90deg,#fdfdfd,#ececec);border-left:1px solid #c4c4c4"></div>
 <div style="left:231px;top:0;width:14px;height:15px;background:#f7f7f7;border-bottom:1px solid #c4c4c4"></div>
 <div style="left:233px;top:5px;width:0;height:0;border-left:4px solid transparent;border-right:4px solid transparent;border-bottom:4px solid #555"></div>
 <div style="left:231px;top:336px;width:14px;height:120px;background:#e9e9e9"></div>
 <div style="left:234px;top:462px;width:0;height:0;border-left:4px solid transparent;border-right:4px solid transparent;border-top:5px solid #444"></div>
 <!-- horizontal scrollbar -->
 <div style="left:0;top:474px;width:230px;height:14px;background:#f4f4f4;border-top:1px solid #d0d0d0"></div>
 <div style="left:13px;top:474px;width:1px;height:14px;background:#d0d0d0"></div>
 <div style="left:216px;top:474px;width:1px;height:14px;background:#d0d0d0"></div>
 <div style="left:161px;top:475px;width:55px;height:13px;background:#e4e4e4;border-left:1px solid #cfcfcf"></div>
 <div style="left:4px;top:477px;width:0;height:0;border-top:4px solid transparent;border-bottom:4px solid transparent;border-right:5px solid #444"></div>
 <div style="left:221px;top:477px;width:0;height:0;border-top:4px solid transparent;border-bottom:4px solid transparent;border-left:5px solid #444"></div>
 <div style="left:230px;top:474px;width:15px;height:14px;background:#f0f0f0;border-top:1px solid #d0d0d0;border-left:1px solid #d0d0d0"></div>
</div>

<div style="left:267px;top:449px;width:2px;height:17px;background:repeating-linear-gradient(#a0a0a0 0 1px,transparent 1px 3px)"></div>
</div>
<div id="view"><svg width="1610" height="909" viewBox="310 109 1610 909" style="position:absolute;left:0;top:0" shape-rendering="crispEdges">
<path d="M0 0m950 397h4v4h-4zm249 -68h4v4h-4zm-21 -34h4v4h-4zm-150 356h4v4h-4zm178 -220h4v4h-4zm-43 272h4v4h-4zm46 -389h4v4h-4zm-72 169h4v4h-4zm-4 -183h4v4h-4zm-69 273h4v4h-4zm0 -277h4v4h-4zm-73 87h4v4h-4zm20 -83h4v4h-4zm81 383h4v4h-4zm22 -118h4v4h-4zm87 -161h4v4h-4zm32 -43h4v4h-4zm-72 337h4v4h-4zm36 -301h4v4h-4zm-54 149h4v4h-4zm48 -172h4v4h-4zm-150 -22h4v4h-4zm-57 -50h4v4h-4zm75 156h4v4h-4zm67 -141h4v4h-4zm-67 47h4v4h-4zm2 180h4v4h-4zm208 -230h4v4h-4zm-199 214h4v4h-4zm76 165h4v4h-4zm-88 -143h4v4h-4zm-8 97h4v4h-4zm87 -268h4v4h-4zm-92 -24h4v4h-4zm181 248h4v4h-4zm-44 -165h4v4h-4zm-71 216h4v4h-4zm-86 -185h4v4h-4zm97 -37h4v4h-4zm30 233h4v4h-4zm10 -133h4v4h-4zm-76 39h4v4h-4zm146 -161h4v4h-4zm-178 100h4v4h-4zm93 8h4v4h-4zm-141 -60h4v4h-4zm89 81h4v4h-4zm164 -156h4v4h-4zm-144 112h4v4h-4zm68 -168h4v4h-4zm-132 -46h4v4h-4zm-20 200h4v4h-4zm-8 -114h4v4h-4zm167 41h4v4h-4zm-53 205h4v4h-4zm-192 -263h4v4h-4zm228 139h4v4h-4zm5 -170h4v4h-4zm-24 30h4v4h-4zm-103 126h4v4h-4zm85 174h4v4h-4zm7 -226h4v4h-4zm-108 -131h4v4h-4zm7 75h4v4h-4zm-60 44h4v4h-4zm-20 -76h4v4h-4zm188 113h4v4h-4zm-185 -115h4v4h-4zm281 30h4v4h-4zm-82 191h4v4h-4zm-61 -14h4v4h-4zm56 -189h4v4h-4zm-23 26h4v4h-4zm-30 -47h4v4h-4zm69 217h4v4h-4zm-77 4h4v4h-4zm-11 -203h4v4h-4zm-2 167h4v4h-4zm133 -176h4v4h-4zm-13 17h4v4h-4zm6 37h4v4h-4zm-60 88h4v4h-4zm80 -93h4v4h-4zm-95 130h4v4h-4zm-61 144h4v4h-4zm161 -328h4v4h-4zm-65 123h4v4h-4zm-51 35h4v4h-4zm54 -113h4v4h-4zm85 -26h4v4h-4zm-255 7h4v4h-4zm-57 -11h4v4h-4zm42 105h4v4h-4zm160 44h4v4h-4zm-77 -217h4v4h-4zm127 33h4v4h-4zm-181 169h4v4h-4zm196 170h4v4h-4zm21 -249h4v4h-4zm-208 59h4v4h-4zm74 174h4v4h-4zm-1 -71h4v4h-4zm-18 -43h4v4h-4zm152 -200h4v4h-4zm-147 283h4v4h-4zm-25 -53h4v4h-4zm183 -263h4v4h-4zm-63 144h4v4h-4zm-39 88h4v4h-4zm-46 129h4v4h-4zm48 -76h4v4h-4zm-26 -123h4v4h-4zm128 -83h4v4h-4zm-257 26h4v4h-4zm163 31h4v4h-4zm62 -105h4v4h-4zm-2 8h4v4h-4zm-60 202h4v4h-4zm115 -217h4v4h-4zm-304 36h4v4h-4zm188 111h4v4h-4zm37 -76h4v4h-4zm-76 -78h4v4h-4zm145 67h4v4h-4zm-71 49h4v4h-4zm81 -76h4v4h-4zm-140 40h4v4h-4zm67 -80h4v4h-4zm-16 211h4v4h-4zm91 -172h4v4h-4zm-242 -26h4v4h-4zm24 151h4v4h-4zm127 201h4v4h-4zm-11 -152h4v4h-4zm25 45h4v4h-4zm-137 -170h4v4h-4zm160 -78h4v4h-4zm48 -7h4v4h-4zm-90 228h4v4h-4zm-131 -163h4v4h-4zm24 147h4v4h-4zm56 -162h4v4h-4zm-30 -26h4v4h-4zm-4 -6h4v4h-4zm94 299h4v4h-4zm49 -299h4v4h-4zm-115 196h4v4h-4zm114 -198h4v4h-4zm-98 176h4v4h-4zm-85 -180h4v4h-4zm170 19h4v4h-4zm-197 -24h4v4h-4zm114 -13h4v4h-4zm-137 91h4v4h-4zm216 24h4v4h-4zm-171 15h4v4h-4zm201 -102h4v4h-4zm-48 19h4v4h-4zm-64 64h4v4h-4zm-92 -84h4v4h-4zm148 32h4v4h-4zm-117 -60h4v4h-4zm91 185h4v4h-4zm-200 -134h4v4h-4zm227 292h4v4h-4zm-80 -91h4v4h-4zm46 -253h4v4h-4zm-48 119h4v4h-4zm-43 -1h4v4h-4zm-73 -23h4v4h-4zm209 287h4v4h-4zm-33 -157h4v4h-4zm-76 -242h4v4h-4zm177 96h4v4h-4zm-47 19h4v4h-4zm-120 -4h4v4h-4zm44 249h4v4h-4zm-34 -287h4v4h-4zm-7 41h4v4h-4zm-130 -81h4v4h-4zm217 245h4v4h-4zm-91 -217h4v4h-4zm83 237h4v4h-4zm-102 -66h4v4h-4zm76 -65h4v4h-4zm68 -158h4v4h-4zm-80 230h4v4h-4zm-149 -170h4v4h-4zm135 -27h4v4h-4zm6 248h4v4h-4zm-2 -206h4v4h-4zm76 320h4v4h-4zm-20 -326h4v4h-4zm-142 151h4v4h-4zm1 -95h4v4h-4zm26 -84h4v4h-4zm99 99h4v4h-4zm-206 -29h4v4h-4zm179 157h4v4h-4zm110 -252h4v4h-4zm-42 -10h4v4h-4zm5 31h4v4h-4zm-85 101h4v4h-4zm114 -45h4v4h-4zm-202 -41h4v4h-4zm49 118h4v4h-4zm49 -140h4v4h-4zm-48 243h4v4h-4zm-6 -54h4v4h-4zm58 -114h4v4h-4zm48 6h4v4h-4zm-147 109h4v4h-4zm182 -185h4v4h-4zm33 -9h4v4h-4zm-63 -5h4v4h-4zm-13 283h4v4h-4zm-63 15h4v4h-4zm71 -78h4v4h-4zm-95 -167h4v4h-4zm-42 98h4v4h-4zm128 146h4v4h-4zm-133 -1h4v4h-4zm-59 -281h4v4h-4zm-4 98h4v4h-4zm98 -66h4v4h-4zm-30 279h4v4h-4zm-34 -255h4v4h-4zm-68 -56h4v4h-4zm68 145h4v4h-4zm-32 -9h4v4h-4zm230 -144h4v4h-4zm-227 91h4v4h-4zm102 146h4v4h-4zm73 -263h4v4h-4zm24 135h4v4h-4zm-59 18h4v4h-4zm124 -104h4v4h-4zm-44 247h4v4h-4zm-174 -281h4v4h-4zm-28 -1h4v4h-4zm37 114h4v4h-4zm147 12h4v4h-4zm-48 -17h4v4h-4zm-159 4h4v4h-4zm194 148h4v4h-4zm-96 -21h4v4h-4zm170 -243h4v4h-4zm-80 60h4v4h-4zm-135 16h4v4h-4zm110 -79h4v4h-4zm-101 83h4v4h-4zm115 147h4v4h-4zm-130 113h4v4h-4zm108 -22h4v4h-4zm38 -110h4v4h-4zm-56 -10h4v4h-4zm24 -51h4v4h-4zm-5 97h4v4h-4zm-135 -222h4v4h-4zm184 272h4v4h-4zm-8 -2h4v4h-4zm-97 87h4v4h-4zm20 -230h4v4h-4zm14 -101h4v4h-4zm-96 17h4v4h-4zm44 48h4v4h-4zm37 238h4v4h-4zm147 -259h4v4h-4zm-94 132h4v4h-4zm-62 -175h4v4h-4zm53 83h4v4h-4zm55 -65h4v4h-4zm-93 -28h4v4h-4zm69 167h4v4h-4zm78 -209h4v4h-4zm-218 80h4v4h-4zm15 -60h4v4h-4zm67 267h4v4h-4zm-5 -135h4v4h-4zm24 -142h4v4h-4zm-58 340h4v4h-4zm-69 -298h4v4h-4zm14 -34h4v4h-4zm149 56h4v4h-4zm-44 -5h4v4h-4zm-108 80h4v4h-4zm167 232h4v4h-4zm-194 -377h4v4h-4zm116 28h4v4h-4zm-1 101h4v4h-4zm73 122h4v4h-4zm71 -237h4v4h-4zm-168 -16h4v4h-4zm3 265h4v4h-4zm71 103h4v4h-4zm-130 -352h4v4h-4zm218 26h4v4h-4zm-43 -54h4v4h-4zm-132 309h4v4h-4zm129 -194h4v4h-4zm-213 53h4v4h-4zm186 64h4v4h-4zm11 142h4v4h-4zm-43 -4h4v4h-4zm-71 -147h4v4h-4zm-75 -77h4v4h-4zm132 182h4v4h-4zm-35 -287h4v4h-4zm78 165h4v4h-4zm-156 -50h4v4h-4zm103 -24h4v4h-4zm86 151h4v4h-4zm-69 -110h4v4h-4zm-70 -4h4v4h-4zm118 230h4v4h-4zm-77 -363h4v4h-4zm-60 214h4v4h-4zm126 -170h4v4h-4zm-170 -36h4v4h-4zm-15 -16h4v4h-4zm234 36h4v4h-4zm-122 -49h4v4h-4zm-73 -26h4v4h-4zm1 175h4v4h-4zm234 -98h4v4h-4zm-257 -64h4v4h-4zm8 -13h4v4h-4zm28 78h4v4h-4zm-91 -15h4v4h-4zm319 -20h4v4h-4zm-1 0h4v4h-4zm6 13h4v4h-4zm-168 -20h4v4h-4zm-30 319h4v4h-4zm-143 -289h4v4h-4zm174 133h4v4h-4zm80 -163h4v4h-4zm-12 70h4v4h-4zm26 -8h4v4h-4zm5 21h4v4h-4zm55 -32h4v4h-4zm-319 26h4v4h-4zm234 -96h4v4h-4zm-103 158h4v4h-4zm-129 -55h4v4h-4zm253 -49h4v4h-4zm-191 38h4v4h-4zm63 64h4v4h-4zm-11 -130h4v4h-4zm56 371h4v4h-4zm38 -111h4v4h-4zm-109 -148h4v4h-4zm208 -88h4v4h-4zm-50 325h4v4h-4zm-181 -209h4v4h-4zm178 213h4v4h-4zm-31 -43h4v4h-4zm-16 -307h4v4h-4zm24 25h4v4h-4zm-217 -2h4v4h-4zm194 97h4v4h-4zm-45 241h4v4h-4zm-43 -73h4v4h-4zm-39 -256h4v4h-4zm57 -41h4v4h-4zm-75 26h4v4h-4zm83 250h4v4h-4zm-135 -240h4v4h-4zm-9 12h4v4h-4zm132 201h4v4h-4zm-46 -130h4v4h-4zm161 -144h4v4h-4zm19 42h4v4h-4zm-153 -42h4v4h-4zm45 150h4v4h-4zm100 -62h4v4h-4zm-164 -42h4v4h-4zm-45 62h4v4h-4zm139 150h4v4h-4zm-55 -250h4v4h-4zm-20 352h4v4h-4zm-48 -183h4v4h-4zm60 15h4v4h-4zm69 185h4v4h-4zm-6 -204h4v4h-4zm-12 -60h4v4h-4zm-181 -19h4v4h-4zm160 -76h4v4h-4zm9 94h4v4h-4zm-83 70h4v4h-4zm75 -36h4v4h-4zm-68 70h4v4h-4zm26 108h4v4h-4zm113 -248h4v4h-4zm56 -85h4v4h-4zm-79 139h4v4h-4zm-159 -9h4v4h-4zm168 -99h4v4h-4zm-86 101h4v4h-4zm60 -92h4v4h-4zm88 68h4v4h-4zm-37 216h4v4h-4zm-213 -155h4v4h-4zm95 55h4v4h-4zm-22 -162h4v4h-4zm-25 -20h4v4h-4zm115 278h4v4h-4zm60 85h4v4h-4zm-176 -339h4v4h-4zm132 19h4v4h-4zm-6 49h4v4h-4zm51 -33h4v4h-4zm-71 186h4v4h-4zm10 -76h4v4h-4zm-48 -170h4v4h-4zm59 235h4v4h-4zm-56 -146h4v4h-4zm49 88h4v4h-4zm-1 -193h4v4h-4zm41 331h4v4h-4zm-125 -28h4v4h-4zm146 -262h4v4h-4zm-135 305h4v4h-4zm46 -330h4v4h-4zm-69 138h4v4h-4zm115 -101h4v4h-4zm-18 288h4v4h-4zm-126 -286h4v4h-4zm112 319h4v4h-4zm-30 -158h4v4h-4zm-22 154h4v4h-4zm68 -239h4v4h-4zm-32 -118h4v4h-4zm81 108h4v4h-4zm-33 247h4v4h-4zm-93 -19h4v4h-4zm-112 -304h4v4h-4zm199 18h4v4h-4zm-26 56h4v4h-4zm-74 -49h4v4h-4zm-26 117h4v4h-4zm36 -144h4v4h-4zm34 -33h4v4h-4zm157 0h4v4h-4zm-109 59h4v4h-4zm-98 -54h4v4h-4zm30 252h4v4h-4zm-81 -133h4v4h-4zm-34 -102h4v4h-4zm97 298h4v4h-4zm30 -297h4v4h-4zm68 83h4v4h-4zm-106 172h4v4h-4zm71 90h4v4h-4zm-138 -334h4v4h-4zm48 94h4v4h-4zm48 21h4v4h-4zm102 202h4v4h-4zm-91 -309h4v4h-4zm107 54h4v4h-4zm-35 261h4v4h-4zm-150 -243h4v4h-4zm-39 -122h4v4h-4zm139 -14h4v4h-4zm-22 220h4v4h-4zm-57 102h4v4h-4zm83 -202h4v4h-4zm-107 35h4v4h-4zm141 -107h4v4h-4zm-11 19h4v4h-4zm101 -8h4v4h-4zm-128 51h4v4h-4zm-76 238h4v4h-4zm40 12h4v4h-4zm-26 -302h4v4h-4zm99 347h4v4h-4zm-93 -363h4v4h-4zm21 58h4v4h-4zm75 -96h4v4h-4zm-99 281h4v4h-4zm-87 -217h4v4h-4zm157 171h4v4h-4zm20 -212h4v4h-4zm-48 136h4v4h-4zm61 54h4v4h-4zm45 29h4v4h-4zm-151 -23h4v4h-4zm173 -234h4v4h-4zm-234 86h4v4h-4zm167 38h4v4h-4zm27 -89h4v4h-4zm-48 318h4v4h-4zm-5 -36h4v4h-4zm-161 -305h4v4h-4zm-16 19h4v4h-4zm153 79h4v4h-4zm110 -121h4v4h-4zm-152 402h4v4h-4zm-50 -212h4v4h-4zm85 -36h4v4h-4zm145 -74h4v4h-4zm-233 18h4v4h-4zm174 -3h4v4h-4zm-90 139h4v4h-4zm-58 -72h4v4h-4zm217 -39h4v4h-4zm-234 38h4v4h-4zm110 20h4v4h-4zm59 130h4v4h-4zm68 -265h4v4h-4zm-180 282h4v4h-4zm-23 -155h4v4h-4zm3 -135h4v4h-4zm14 170h4v4h-4zm88 21h4v4h-4zm-33 -100h4v4h-4zm56 90h4v4h-4zm-95 -176h4v4h-4zm123 308h4v4h-4zm-84 -66h4v4h-4zm84 -238h4v4h-4zm-164 92h4v4h-4zm78 221h4v4h-4zm-40 -228h4v4h-4zm-55 -95h4v4h-4zm161 244h4v4h-4zm-19 -149h4v4h-4zm92 -46h4v4h-4zm-81 82h4v4h-4zm-115 -145h4v4h-4zm-100 146h4v4h-4zm172 -15h4v4h-4zm67 238h4v4h-4zm-172 -345h4v4h-4zm-53 90h4v4h-4zm-41 -40h4v4h-4zm150 88h4v4h-4zm115 -43h4v4h-4zm-143 75h4v4h-4zm134 60h4v4h-4zm-107 -49h4v4h-4zm147 -131h4v4h-4zm-89 -1h4v4h-4zm-175 -72h4v4h-4zm178 256h4v4h-4zm72 -172h4v4h-4zm-3 -7h4v4h-4zm-53 67h4v4h-4zm-13 203h4v4h-4zm37 -28h4v4h-4zm-82 -313h4v4h-4zm-91 129h4v4h-4zm189 -143h4v4h-4zm-11 18h4v4h-4zm-72 250h4v4h-4zm-41 12h4v4h-4zm-103 -148h4v4h-4zm80 244h4v4h-4zm134 -258h4v4h-4zm38 -104h4v4h-4zm-173 -10h4v4h-4zm40 262h4v4h-4zm-35 -193h4v4h-4zm65 289h4v4h-4zm29 -80h4v4h-4zm-94 -14h4v4h-4zm69 -142h4v4h-4zm-65 -124h4v4h-4zm7 168h4v4h-4zm31 -121h4v4h-4zm47 307h4v4h-4zm35 -213h4v4h-4zm-36 -28h4v4h-4zm-3 295h4v4h-4zm-55 -37h4v4h-4zm76 -161h4v4h-4zm-63 -117h4v4h-4zm3 16h4v4h-4zm29 207h4v4h-4zm3 -106h4v4h-4zm-156 -57h4v4h-4zm209 170h4v4h-4zm-252 -233h4v4h-4zm310 11h4v4h-4zm-127 -59h4v4h-4zm-4 36h4v4h-4zm67 65h4v4h-4zm-22 181h4v4h-4zm-145 -116h4v4h-4zm178 192h4v4h-4zm-46 -84h4v4h-4zm-18 -33h4v4h-4zm-1 94h4v4h-4zm-63 -188h4v4h-4zm10 -30h4v4h-4zm-71 -37h4v4h-4zm251 -82h4v4h-4zm-280 -3h4v4h-4zm262 -25h4v4h-4zm-226 162h4v4h-4zm123 -95h4v4h-4zm-62 201h4v4h-4zm89 14h4v4h-4zm-48 -235h4v4h-4zm49 75h4v4h-4zm-11 125h4v4h-4zm-19 -160h4v4h-4zm42 -85h4v4h-4zm-179 61h4v4h-4zm234 -21h4v4h-4zm-191 312h4v4h-4zm148 0h4v4h-4zm-41 -359h4v4h-4zm63 57h4v4h-4zm-142 111h4v4h-4zm82 -87h4v4h-4zm64 -25h4v4h-4zm-23 231h4v4h-4zm-162 -88h4v4h-4zm53 -217h4v4h-4zm-43 256h4v4h-4zm130 69h4v4h-4zm-102 55h4v4h-4zm3 -339h4v4h-4zm126 243h4v4h-4zm-165 -38h4v4h-4zm92 66h4v4h-4zm-16 -52h4v4h-4zm39 75h4v4h-4zm-121 -327h4v4h-4zm110 381h4v4h-4zm-108 -295h4v4h-4zm88 89h4v4h-4zm-47 -64h4v4h-4zm71 85h4v4h-4zm-81 27h4v4h-4zm199 -152h4v4h-4zm-68 -71h4v4h-4zm-126 13h4v4h-4zm2 280h4v4h-4zm-96 -248h4v4h-4zm43 33h4v4h-4zm30 -74h4v4h-4zm53 211h4v4h-4zm68 196h4v4h-4zm-140 -293h4v4h-4zm46 -117h4v4h-4zm-10 226h4v4h-4zm39 -144h4v4h-4zm-77 10h4v4h-4zm21 -73h4v4h-4zm160 309h4v4h-4zm-71 -128h4v4h-4zm-23 -196h4v4h-4zm51 268h4v4h-4zm56 46h4v4h-4zm-152 -238h4v4h-4zm93 149h4v4h-4zm56 -221h4v4h-4zm-68 1h4v4h-4zm-149 72h4v4h-4zm139 324h4v4h-4zm-143 -279h4v4h-4zm-36 -66h4v4h-4zm98 -30h4v4h-4zm69 169h4v4h-4zm103 -122h4v4h-4zm-91 240h4v4h-4zm-76 -265h4v4h-4zm111 238h4v4h-4zm-55 -239h4v4h-4zm-32 308h4v4h-4zm52 44h4v4h-4zm-48 -103h4v4h-4zm147 -244h4v4h-4zm-80 49h4v4h-4zm-206 -71h4v4h-4zm301 78h4v4h-4zm-186 73h4v4h-4zm106 88h4v4h-4zm-20 -28h4v4h-4zm-40 -104h4v4h-4zm119 -54h4v4h-4zm-181 60h4v4h-4zm-24 -96h4v4h-4zm-31 128h4v4h-4zm126 96h4v4h-4zm40 -273h4v4h-4zm12 282h4v4h-4zm-33 -9h4v4h-4zm-196 -195h4v4h-4zm0 -22h4v4h-4zm312 -43h4v4h-4zm-212 103h4v4h-4zm-34 28h4v4h-4zm33 190h4v4h-4zm88 -95h4v4h-4zm108 -151h4v4h-4zm-158 161h4v4h-4zm38 99h4v4h-4zm-21 37h4v4h-4zm-15 -303h4v4h-4zm117 252h4v4h-4zm-174 -249h4v4h-4zm-53 63h4v4h-4zm65 -103h4v4h-4zm-101 44h4v4h-4zm173 194h4v4h-4zm81 -244h4v4h-4zm-146 -24h4v4h-4zm131 2h4v4h-4zm-115 245h4v4h-4zm-10 -62h4v4h-4zm189 -201h4v4h-4zm-68 179h4v4h-4zm-80 190h4v4h-4zm-31 -144h4v4h-4zm174 -113h4v4h-4zm-95 -85h4v4h-4zm-141 -6h4v4h-4zm44 122h4v4h-4zm-101 -29h4v4h-4zm310 -119h4v4h-4zm-190 100h4v4h-4zm-69 -80h4v4h-4zm180 177h4v4h-4zm-37 -79h4v4h-4zm58 147h4v4h-4zm-172 -274h4v4h-4zm41 345h4v4h-4zm103 -267h4v4h-4zm-95 295h4v4h-4zm145 -266h4v4h-4zm-15 16h4v4h-4zm-139 44h4v4h-4zm-78 -107h4v4h-4zm132 220h4v4h-4zm-148 -205h4v4h-4zm191 67h4v4h-4zm-98 -19h4v4h-4zm80 149h4v4h-4zm-90 -155h4v4h-4zm28 264h4v4h-4zm-15 -225h4v4h-4zm146 -33h4v4h-4zm-170 -10h4v4h-4zm208 -67h4v4h-4zm-225 127h4v4h-4zm219 -85h4v4h-4zm-190 -44h4v4h-4zm-100 29h4v4h-4zm173 172h4v4h-4zm31 130h4v4h-4zm-40 -113h4v4h-4zm56 -206h4v4h-4zm64 -28h4v4h-4zm-129 23h4v4h-4zm-38 1h4v4h-4zm-2 184h4v4h-4zm-10 -221h4v4h-4zm-3 109h4v4h-4zm32 263h4v4h-4zm49 -39h4v4h-4zm-47 -37h4v4h-4zm106 26h4v4h-4zm-152 -252h4v4h-4zm72 61h4v4h-4zm81 -41h4v4h-4zm-4 231h4v4h-4zm-154 14h4v4h-4zm130 -290h4v4h-4zm44 86h4v4h-4zm-62 -138h4v4h-4zm-161 14h4v4h-4zm113 18h4v4h-4zm-65 316h4v4h-4zm-44 -211h4v4h-4zm13 -57h4v4h-4zm136 241h4v4h-4zm30 -17h4v4h-4zm-120 -298h4v4h-4zm-73 68h4v4h-4zm266 20h4v4h-4zm-55 308h4v4h-4zm4 -109h4v4h-4zm32 -244h4v4h-4zm-100 238h4v4h-4zm72 -157h4v4h-4zm-16 -93h4v4h-4zm13 306h4v4h-4zm-216 -212h4v4h-4zm41 -62h4v4h-4zm78 155h4v4h-4zm97 19h4v4h-4zm-160 -106h4v4h-4zm-36 -117h4v4h-4zm133 383h4v4h-4zm-24 -194h4v4h-4zm-104 -12h4v4h-4zm193 183h4v4h-4zm-51 -291h4v4h-4zm-18 102h4v4h-4zm-87 200h4v4h-4zm127 -278h4v4h-4zm-21 250h4v4h-4zm5 -197h4v4h-4zm-21 -14h4v4h-4zm44 254h4v4h-4zm23 -330h4v4h-4zm-113 -45h4v4h-4zm134 -37h4v4h-4zm-153 210h4v4h-4zm-60 -83h4v4h-4zm136 -73h4v4h-4zm-80 324h4v4h-4zm-84 -266h4v4h-4zm183 91h4v4h-4zm18 51h4v4h-4zm-89 -246h4v4h-4zm89 299h4v4h-4zm-127 -293h4v4h-4zm108 392h4v4h-4zm-32 -368h4v4h-4zm-36 254h4v4h-4zm-23 -94h4v4h-4zm-103 -175h4v4h-4zm245 -2h4v4h-4zm-82 184h4v4h-4zm-92 -65h4v4h-4zm144 116h4v4h-4zm-58 -191h4v4h-4zm-140 105h4v4h-4zm161 -146h4v4h-4zm-88 359h4v4h-4zm-14 -227h4v4h-4zm165 -117h4v4h-4zm-98 25h4v4h-4zm-91 162h4v4h-4zm65 -169h4v4h-4zm96 108h4v4h-4zm-57 -69h4v4h-4zm-104 -7h4v4h-4zm99 185h4v4h-4zm-79 -131h4v4h-4zm138 98h4v4h-4zm-129 8h4v4h-4zm157 -108h4v4h-4zm-5 256h4v4h-4zm-124 -180h4v4h-4zm-42 -61h4v4h-4zm85 158h4v4h-4zm35 -202h4v4h-4zm-10 2h4v4h-4zm-171 3h4v4h-4zm204 39h4v4h-4zm-183 -114h4v4h-4zm87 223h4v4h-4zm76 -78h4v4h-4zm-198 -124h4v4h-4zm52 13h4v4h-4zm56 235h4v4h-4zm-51 -190h4v4h-4zm107 151h4v4h-4zm17 -33h4v4h-4zm27 -99h4v4h-4zm-27 -29h4v4h-4zm-83 229h4v4h-4zm126 -178h4v4h-4zm-103 83h4v4h-4zm45 -104h4v4h-4zm-22 -35h4v4h-4zm-26 217h4v4h-4zm109 -187h4v4h-4zm-199 -31h4v4h-4zm188 89h4v4h-4zm-189 -127h4v4h-4zm13 66h4v4h-4zm93 165h4v4h-4zm87 94h4v4h-4zm-220 -275h4v4h-4zm257 5h4v4h-4zm10 9h4v4h-4zm-81 166h4v4h-4zm-119 -196h4v4h-4zm19 220h4v4h-4zm0 -227h4v4h-4zm-4 96h4v4h-4zm71 160h4v4h-4zm-168 -276h4v4h-4zm229 92h4v4h-4zm-75 90h4v4h-4zm24 -183h4v4h-4zm-27 291h4v4h-4zm-36 -135h4v4h-4zm42 119h4v4h-4zm71 -63h4v4h-4zm-67 -116h4v4h-4zm-34 64h4v4h-4zm-5 -142h4v4h-4zm-76 -76h4v4h-4zm232 72h4v4h-4zm-28 328h4v4h-4zm-130 -26h4v4h-4zm156 -257h4v4h-4zm-101 197h4v4h-4zm-13 30h4v4h-4zm-133 -214h4v4h-4zm255 -137h4v4h-4zm-123 393h4v4h-4zm139 -360h4v4h-4zm-169 165h4v4h-4zm51 -136h4v4h-4zm58 331h4v4h-4zm-77 -52h4v4h-4zm-78 -5h4v4h-4zm57 -318h4v4h-4zm100 386h4v4h-4zm7 -184h4v4h-4zm-27 -184h4v4h-4zm-52 76h4v4h-4zm-52 236h4v4h-4zm-10 -166h4v4h-4zm165 -48h4v4h-4zm-153 255h4v4h-4zm1 -36h4v4h-4zm52 -26h4v4h-4zm-148 -218h4v4h-4zm105 90h4v4h-4zm-50 29h4v4h-4zm-54 -114h4v4h-4zm307 -85h4v4h-4zm-165 228h4v4h-4zm61 85h4v4h-4zm-89 -286h4v4h-4zm59 38h4v4h-4zm-57 21h4v4h-4zm151 -74h4v4h-4zm-79 271h4v4h-4zm-134 -132h4v4h-4zm79 37h4v4h-4zm65 -139h4v4h-4zm-178 -63h4v4h-4zm-30 20h4v4h-4zm116 97h4v4h-4zm-126 -22h4v4h-4zm168 -68h4v4h-4zm-28 1h4v4h-4zm-1 -21h4v4h-4zm12 127h4v4h-4zm121 165h4v4h-4zm-35 77h4v4h-4zm-187 -329h4v4h-4zm34 -34h4v4h-4zm197 6h4v4h-4zm-157 48h4v4h-4zm79 96h4v4h-4zm102 -123h4v4h-4zm-118 280h4v4h-4zm-94 -143h4v4h-4zm103 -95h4v4h-4zm-95 179h4v4h-4zm53 -147h4v4h-4zm100 279h4v4h-4zm-179 -38h4v4h-4zm98 -375h4v4h-4zm93 306h4v4h-4zm-47 67h4v4h-4zm22 -298h4v4h-4zm-114 245h4v4h-4zm181 -265h4v4h-4zm-162 37h4v4h-4zm-12 120h4v4h-4zm54 -61h4v4h-4zm64 -101h4v4h-4zm21 6h4v4h-4zm-268 64h4v4h-4zm51 -5h4v4h-4zm114 256h4v4h-4zm9 -191h4v4h-4zm-64 86h4v4h-4zm45 -11h4v4h-4zm156 -173h4v4h-4zm-25 -13h4v4h-4zm-156 34h4v4h-4zm-48 2h4v4h-4zm112 300h4v4h-4zm-143 -266h4v4h-4zm240 -102h4v4h-4zm-166 117h4v4h-4zm-114 -70h4v4h-4zm107 17h4v4h-4zm113 180h4v4h-4zm-10 42h4v4h-4zm-77 -190h4v4h-4zm145 -104h4v4h-4zm-142 95h4v4h-4zm64 129h4v4h-4zm88 -216h4v4h-4zm-87 -18h4v4h-4zm3 92h4v4h-4zm-1 -4h4v4h-4zm-105 -10h4v4h-4zm53 315h4v4h-4zm-133 -275h4v4h-4zm146 -81h4v4h-4zm60 95h4v4h-4zm7 95h4v4h-4zm-213 -67h4v4h-4zm149 126h4v4h-4zm-132 -193h4v4h-4zm-22 9h4v4h-4zm228 -102h4v4h-4zm-76 166h4v4h-4zm-44 -43h4v4h-4zm8 26h4v4h-4zm-117 -32h4v4h-4zm102 260h4v4h-4zm-32 -38h4v4h-4zm-34 -262h4v4h-4zm44 249h4v4h-4zm-88 -212h4v4h-4zm143 81h4v4h-4zm-66 25h4v4h-4zm8 106h4v4h-4zm-44 -273h4v4h-4zm28 169h4v4h-4zm83 25h4v4h-4zm48 -108h4v4h-4zm-97 -69h4v4h-4zm190 -73h4v4h-4zm-101 303h4v4h-4zm-127 -124h4v4h-4zm162 -143h4v4h-4zm-39 303h4v4h-4zm-54 -34h4v4h-4zm-141 -217h4v4h-4zm261 -31h4v4h-4zm-121 226h4v4h-4zm4 -71h4v4h-4zm-10 70h4v4h-4zm-22 -260h4v4h-4zm28 293h4v4h-4zm-17 -263h4v4h-4zm43 265h4v4h-4zm-21 38h4v4h-4zm-67 -316h4v4h-4zm164 9h4v4h-4zm-32 334h4v4h-4zm-137 -274h4v4h-4zm153 264h4v4h-4zm-119 -206h4v4h-4zm21 -37h4v4h-4zm52 -103h4v4h-4zm91 -23h4v4h-4zm-197 112h4v4h-4zm-50 40h4v4h-4zm194 47h4v4h-4zm-142 -17h4v4h-4zm23 38h4v4h-4zm58 -213h4v4h-4zm39 86h4v4h-4zm-14 143h4v4h-4zm58 -189h4v4h-4zm-76 13h4v4h-4zm43 190h4v4h-4zm24 -258h4v4h-4zm-140 128h4v4h-4zm143 -128h4v4h-4zm-91 400h4v4h-4zm27 -53h4v4h-4zm52 -130h4v4h-4zm-115 -77h4v4h-4zm38 130h4v4h-4zm-90 -81h4v4h-4zm118 -170h4v4h-4zm23 362h4v4h-4zm28 -77h4v4h-4zm-13 -304h4v4h-4zm-114 144h4v4h-4zm174 -106h4v4h-4zm-52 193h4v4h-4zm-195 -179h4v4h-4zm138 -6h4v4h-4zm38 -14h4v4h-4zm6 295h4v4h-4zm-59 -303h4v4h-4zm93 52h4v4h-4zm-222 74h4v4h-4zm110 196h4v4h-4zm-1 -152h4v4h-4zm100 158h4v4h-4zm-93 -268h4v4h-4zm-31 281h4v4h-4zm-124 -280h4v4h-4zm57 -32h4v4h-4zm111 243h4v4h-4zm24 -221h4v4h-4zm-188 -24h4v4h-4zm264 235h4v4h-4zm-36 50h4v4h-4zm-179 -166h4v4h-4zm195 -99h4v4h-4zm-106 170h4v4h-4zm161 -139h4v4h-4zm-143 54h4v4h-4zm-31 -56h4v4h-4zm80 101h4v4h-4zm-105 -80h4v4h-4zm137 91h4v4h-4zm-68 92h4v4h-4zm-56 -250h4v4h-4zm-86 -33h4v4h-4zm151 90h4v4h-4zm7 191h4v4h-4zm17 -243h4v4h-4zm-72 182h4v4h-4zm65 -49h4v4h-4zm-109 -143h4v4h-4zm129 353h4v4h-4zm-65 -233h4v4h-4zm-152 -106h4v4h-4zm223 15h4v4h-4zm-164 -20h4v4h-4zm198 -53h4v4h-4zm-38 173h4v4h-4zm-67 -116h4v4h-4zm-119 -57h4v4h-4zm130 252h4v4h-4zm-107 -225h4v4h-4zm74 -14h4v4h-4zm108 283h4v4h-4zm-50 -247h4v4h-4zm68 321h4v4h-4zm4 3h4v4h-4zm-70 -113h4v4h-4zm-123 -157h4v4h-4zm98 -70h4v4h-4zm83 21h4v4h-4zm-92 303h4v4h-4zm84 -323h4v4h-4zm11 249h4v4h-4zm-38 -253h4v4h-4zm17 125h4v4h-4zm-124 147h4v4h-4zm35 -285h4v4h-4zm-14 116h4v4h-4zm53 231h4v4h-4zm-69 -89h4v4h-4zm10 -13h4v4h-4zm-31 67h4v4h-4zm148 52h4v4h-4zm-11 -362h4v4h-4zm2 283h4v4h-4zm45 -272h4v4h-4zm8 -12h4v4h-4zm-137 301h4v4h-4zm71 -205h4v4h-4zm-217 -74h4v4h-4zm244 235h4v4h-4zm-76 -141h4v4h-4zm154 -137h4v4h-4zm-147 223h4v4h-4zm-37 -146h4v4h-4zm22 38h4v4h-4zm0 -111h4v4h-4zm-61 56h4v4h-4zm-104 -11h4v4h-4zm219 243h4v4h-4zm-4 -294h4v4h-4zm-203 62h4v4h-4zm244 67h4v4h-4zm-218 -96h4v4h-4zm227 90h4v4h-4zm-52 110h4v4h-4zm-86 13h4v4h-4zm138 -204h4v4h-4zm5 -12h4v4h-4zm-61 -30h4v4h-4zm-147 157h4v4h-4zm145 123h4v4h-4zm33 20h4v4h-4zm-127 -31h4v4h-4zm116 -27h4v4h-4zm84 -177h4v4h-4zm-166 69h4v4h-4zm135 -51h4v4h-4zm-24 259h4v4h-4zm-126 -304h4v4h-4zm97 39h4v4h-4zm-171 -58h4v4h-4zm180 247h4v4h-4zm-115 66h4v4h-4zm103 -129h4v4h-4zm-56 -40h4v4h-4zm31 37h4v4h-4zm104 -102h4v4h-4zm-206 11h4v4h-4zm34 49h4v4h-4zm130 109h4v4h-4zm65 -210h4v4h-4zm-194 19h4v4h-4zm89 90h4v4h-4zm-119 -163h4v4h-4zm41 75h4v4h-4zm183 -52h4v4h-4zm-73 282h4v4h-4zm41 -195h4v4h-4zm-97 117h4v4h-4zm-132 -202h4v4h-4zm222 -10h4v4h-4zm-254 96h4v4h-4zm188 -97h4v4h-4zm-155 112h4v4h-4zm233 -117h4v4h-4zm-111 -19h4v4h-4zm-36 51h4v4h-4zm20 89h4v4h-4zm-57 -79h4v4h-4zm68 142h4v4h-4zm45 -18h4v4h-4zm-50 -32h4v4h-4zm-10 1h4v4h-4zm10 -121h4v4h-4zm-125 68h4v4h-4zm112 47h4v4h-4zm42 -29h4v4h-4zm34 -23h4v4h-4zm-123 -40h4v4h-4zm-92 -32h4v4h-4zm69 72h4v4h-4zm144 200h4v4h-4zm-142 -218h4v4h-4zm100 315h4v4h-4zm-11 -383h4v4h-4zm59 228h4v4h-4zm-187 -58h4v4h-4zm183 -114h4v4h-4zm-51 41h4v4h-4zm-55 -59h4v4h-4zm150 74h4v4h-4zm-215 7h4v4h-4zm66 82h4v4h-4zm-31 95h4v4h-4zm196 -296h4v4h-4zm-72 177h4v4h-4zm-91 -98h4v4h-4zm-96 -81h4v4h-4zm75 121h4v4h-4zm-52 -1h4v4h-4zm44 8h4v4h-4zm77 19h4v4h-4zm-144 -85h4v4h-4zm194 121h4v4h-4zm-76 -157h4v4h-4zm-7 76h4v4h-4zm148 -64h4v4h-4zm-110 -50h4v4h-4zm-18 65h4v4h-4zm22 217h4v4h-4zm138 -251h4v4h-4zm-249 171h4v4h-4zm45 -122h4v4h-4zm85 -65h4v4h-4zm-60 136h4v4h-4zm-125 -82h4v4h-4zm273 3h4v4h-4zm-141 25h4v4h-4zm90 250h4v4h-4zm29 -352h4v4h-4zm-13 108h4v4h-4zm-228 37h4v4h-4zm126 -42h4v4h-4zm14 269h4v4h-4zm94 -6h4v4h-4zm-30 -59h4v4h-4zm-54 -154h4v4h-4zm75 -65h4v4h-4zm15 226h4v4h-4zm-162 -115h4v4h-4zm79 108h4v4h-4zm66 -297h4v4h-4zm-149 370h4v4h-4zm50 -149h4v4h-4zm-58 -150h4v4h-4zm114 2h4v4h-4zm60 -17h4v4h-4zm-134 137h4v4h-4zm171 -177h4v4h-4zm-72 47h4v4h-4zm-21 280h4v4h-4zm47 -314h4v4h-4zm-59 35h4v4h-4zm-131 14h4v4h-4zm122 -47h4v4h-4zm-3 232h4v4h-4zm-134 -196h4v4h-4zm160 86h4v4h-4zm-69 158h4v4h-4zm-68 -129h4v4h-4zm167 142h4v4h-4zm-139 -322h4v4h-4zm78 302h4v4h-4zm-131 -149h4v4h-4zm139 256h4v4h-4zm43 -345h4v4h-4zm-172 75h4v4h-4zm-26 -55h4v4h-4zm-2 -82h4v4h-4zm162 251h4v4h-4zm-60 -137h4v4h-4zm156 -2h4v4h-4zm-118 254h4v4h-4zm23 -338h4v4h-4zm-18 272h4v4h-4zm61 -166h4v4h-4zm-14 -121h4v4h-4zm-88 22h4v4h-4zm59 -33h4v4h-4zm-54 143h4v4h-4zm104 -62h4v4h-4zm-141 -73h4v4h-4zm165 79h4v4h-4zm-119 64h4v4h-4zm-20 142h4v4h-4zm2 -190h4v4h-4zm83 -26h4v4h-4zm19 314h4v4h-4zm-105 -334h4v4h-4zm-85 6h4v4h-4zm83 159h4v4h-4zm87 -43h4v4h-4zm-89 -153h4v4h-4zm-17 121h4v4h-4zm131 -75h4v4h-4zm-53 258h4v4h-4zm-35 -67h4v4h-4zm13 -145h4v4h-4zm-40 186h4v4h-4zm82 -134h4v4h-4zm67 -46h4v4h-4zm-155 35h4v4h-4zm-63 -1h4v4h-4zm107 43h4v4h-4zm152 -178h4v4h-4zm-253 11h4v4h-4zm-48 46h4v4h-4zm252 -16h4v4h-4zm-137 185h4v4h-4zm121 -116h4v4h-4zm-87 -69h4v4h-4zm-136 -4h4v4h-4zm140 146h4v4h-4zm23 99h4v4h-4zm86 -225h4v4h-4zm-71 274h4v4h-4zm27 -286h4v4h-4zm-70 88h4v4h-4zm-159 -140h4v4h-4zm196 302h4v4h-4zm-132 -191h4v4h-4zm27 50h4v4h-4zm199 -91h4v4h-4zm-58 8h4v4h-4zm-39 300h4v4h-4zm83 -341h4v4h-4zm-269 -19h4v4h-4zm87 284h4v4h-4zm-107 -283h4v4h-4zm198 228h4v4h-4zm11 -190h4v4h-4zm79 -84h4v4h-4zm20 11h4v4h-4zm-86 26h4v4h-4zm-60 104h4v4h-4zm-63 -25h4v4h-4zm100 -3h4v4h-4zm-24 -83h4v4h-4zm-6 186h4v4h-4zm-84 13h4v4h-4zm68 153h4v4h-4zm30 -168h4v4h-4zm-76 -39h4v4h-4zm134 129h4v4h-4zm85 -238h4v4h-4zm-252 -61h4v4h-4zm35 196h4v4h-4zm120 167h4v4h-4zm-141 -359h4v4h-4zm115 268h4v4h-4zm-23 111h4v4h-4zm-144 -269h4v4h-4zm160 82h4v4h-4zm-99 -194h4v4h-4zm11 96h4v4h-4zm-66 77h4v4h-4zm8 -166h4v4h-4zm119 264h4v4h-4zm16 -38h4v4h-4zm50 -208h4v4h-4zm101 16h4v4h-4zm-100 360h4v4h-4zm-101 -48h4v4h-4zm14 31h4v4h-4zm-15 -250h4v4h-4zm37 162h4v4h-4zm-61 -304h4v4h-4zm-22 373h4v4h-4zm44 -156h4v4h-4zm81 181h4v4h-4zm122 -346h4v4h-4zm-255 81h4v4h-4zm134 175h4v4h-4zm30 -225h4v4h-4zm0 64h4v4h-4zm-185 -138h4v4h-4zm18 106h4v4h-4zm33 -43h4v4h-4zm53 322h4v4h-4zm-133 -294h4v4h-4zm69 234h4v4h-4zm-23 -253h4v4h-4zm136 209h4v4h-4zm28 -134h4v4h-4zm-35 131h4v4h-4zm-84 -50h4v4h-4zm106 -98h4v4h-4zm67 -70h4v4h-4zm22 0h4v4h-4zm-167 51h4v4h-4zm-117 -49h4v4h-4zm103 -63h4v4h-4zm-94 28h4v4h-4zm92 63h4v4h-4zm-111 -42h4v4h-4zm151 276h4v4h-4zm130 -305h4v4h-4zm-213 105h4v4h-4zm142 15h4v4h-4zm-126 193h4v4h-4zm45 -140h4v4h-4zm-29 45h4v4h-4zm73 17h4v4h-4zm48 -98h4v4h-4zm-67 183h4v4h-4zm-75 -131h4v4h-4zm80 -154h4v4h-4zm110 -5h4v4h-4zm-170 301h4v4h-4zm15 -68h4v4h-4zm-45 88h4v4h-4z" fill="#5e1a1a"/>
<path d="M0 0m1338 193h4v4h-4zm-114 469h4v4h-4zm-380 -336h4v4h-4zm387 194h4v4h-4zm37 -128h4v4h-4zm206 479h4v4h-4zm-270 -62h4v4h-4zm106 -595h4v4h-4zm-94 -1h4v4h-4zm183 60h4v4h-4zm34 571h4v4h-4zm-154 -674h4v4h-4zm-132 705h4v4h-4zm-409 -608h4v4h-4zm419 -41h4v4h-4zm98 408h4v4h-4zm183 -209h4v4h-4zm-238 27h4v4h-4zm-193 318h4v4h-4zm42 93h4v4h-4zm254 -728h4v4h-4zm116 267h4v4h-4zm-592 112h4v4h-4zm442 108h4v4h-4zm-386 -387h4v4h-4zm391 34h4v4h-4zm-302 467h4v4h-4zm220 53h4v4h-4zm145 135h4v4h-4zm-363 -742h4v4h-4zm165 617h4v4h-4zm205 -535h4v4h-4zm-10 -30h4v4h-4zm11 381h4v4h-4zm-90 -448h4v4h-4zm-346 367h4v4h-4zm286 407h4v4h-4zm-216 -275h4v4h-4zm308 -447h4v4h-4zm-394 67h4v4h-4zm229 -34h4v4h-4zm264 407h4v4h-4zm42 -267h4v4h-4zm7 588h4v4h-4zm-332 -190h4v4h-4zm147 -512h4v4h-4zm65 124h4v4h-4zm-111 70h4v4h-4zm113 325h4v4h-4zm-245 -679h4v4h-4zm157 503h4v4h-4zm-331 -152h4v4h-4zm-50 -23h4v4h-4zm227 -186h4v4h-4zm-42 322h4v4h-4zm-102 -461h4v4h-4zm252 91h4v4h-4zm-62 8h4v4h-4zm169 103h4v4h-4zm16 -44h4v4h-4zm-174 -106h4v4h-4zm-138 366h4v4h-4zm205 261h4v4h-4zm-218 -39h4v4h-4zm66 70h4v4h-4zm375 -500h4v4h-4zm-416 -48h4v4h-4zm404 78h4v4h-4zm-294 435h4v4h-4zm154 34h4v4h-4zm-414 -340h4v4h-4zm-21 -326h4v4h-4zm332 762h4v4h-4zm-390 -652h4v4h-4zm95 0h4v4h-4zm266 569h4v4h-4zm-321 -594h4v4h-4zm545 -67h4v4h-4zm-86 13h4v4h-4zm90 101h4v4h-4zm-383 430h4v4h-4zm385 -29h4v4h-4zm-371 50h4v4h-4zm13 -39h4v4h-4zm364 -67h4v4h-4zm-500 -392h4v4h-4zm86 230h4v4h-4zm262 -275h4v4h-4zm-20 82h4v4h-4zm-44 570h4v4h-4zm135 -405h4v4h-4zm-221 -214h4v4h-4zm83 27h4v4h-4zm-251 355h4v4h-4zm485 -143h4v4h-4zm-237 447h4v4h-4zm153 -541h4v4h-4zm-560 -162h4v4h-4zm513 362h4v4h-4zm-319 -118h4v4h-4zm295 424h4v4h-4zm114 -580h4v4h-4zm-10 -89h4v4h-4zm-405 181h4v4h-4zm47 235h4v4h-4zm395 -208h4v4h-4zm26 323h4v4h-4zm-648 -441h4v4h-4zm518 -24h4v4h-4zm-222 298h4v4h-4zm-132 18h4v4h-4zm507 396h4v4h-4zm-357 -213h4v4h-4zm161 29h4v4h-4zm99 -556h4v4h-4zm6 563h4v4h-4zm-236 -680h4v4h-4zm-261 105h4v4h-4zm501 77h4v4h-4zm-394 -176h4v4h-4zm-114 191h4v4h-4zm-25 125h4v4h-4zm232 -285h4v4h-4zm-160 159h4v4h-4zm313 -192h4v4h-4zm32 17h4v4h-4zm37 725h4v4h-4zm-393 -465h4v4h-4zm274 -166h4v4h-4zm-275 274h4v4h-4zm531 -237h4v4h-4zm-482 -167h4v4h-4zm407 450h4v4h-4zm-376 -85h4v4h-4zm339 218h4v4h-4zm-410 -337h4v4h-4zm-8 -226h4v4h-4zm577 158h4v4h-4zm-562 374h4v4h-4zm37 -426h4v4h-4zm-32 -59h4v4h-4zm149 52h4v4h-4zm-131 465h4v4h-4zm418 -36h4v4h-4zm49 307h4v4h-4zm108 -130h4v4h-4zm-524 -582h4v4h-4zm104 535h4v4h-4zm-326 -466h4v4h-4zm609 124h4v4h-4zm26 158h4v4h-4zm-22 -398h4v4h-4zm-313 455h4v4h-4zm241 -461h4v4h-4zm-486 190h4v4h-4zm134 56h4v4h-4zm-113 -195h4v4h-4zm646 68h4v4h-4zm-541 -21h4v4h-4zm-161 -41h4v4h-4zm261 -112h4v4h-4zm214 509h4v4h-4zm-209 74h4v4h-4zm-144 -285h4v4h-4zm353 380h4v4h-4zm-264 -63h4v4h-4zm-130 -572h4v4h-4zm142 293h4v4h-4zm435 -99h4v4h-4zm-176 88h4v4h-4zm-357 164h4v4h-4zm251 238h4v4h-4zm-211 -200h4v4h-4zm226 129h4v4h-4zm198 -571h4v4h-4zm56 613h4v4h-4zm-203 62h4v4h-4zm213 -157h4v4h-4zm-171 -267h4v4h-4zm-166 -272h4v4h-4zm222 208h4v4h-4zm-256 414h4v4h-4zm261 -197h4v4h-4zm-39 64h4v4h-4zm-364 -226h4v4h-4zm530 476h4v4h-4zm-564 -522h4v4h-4zm152 335h4v4h-4zm275 30h4v4h-4zm176 108h4v4h-4zm-487 -324h4v4h-4zm128 -370h4v4h-4zm-310 -32h4v4h-4zm233 -31h4v4h-4zm245 92h4v4h-4zm-173 672h4v4h-4zm-166 -148h4v4h-4zm57 -279h4v4h-4zm-119 -297h4v4h-4zm75 347h4v4h-4zm357 3h4v4h-4zm90 -77h4v4h-4zm-23 -67h4v4h-4zm-65 227h4v4h-4zm-307 -119h4v4h-4zm236 90h4v4h-4zm-87 337h4v4h-4zm-325 -515h4v4h-4zm465 202h4v4h-4zm-11 -128h4v4h-4zm30 -297h4v4h-4zm-439 87h4v4h-4zm61 49h4v4h-4zm396 6h4v4h-4zm-445 174h4v4h-4zm236 -339h4v4h-4zm-276 405h4v4h-4zm191 -37h4v4h-4zm118 -316h4v4h-4zm244 720h4v4h-4zm-311 -136h4v4h-4zm-242 -496h4v4h-4zm497 277h4v4h-4zm-22 -266h4v4h-4zm-474 93h4v4h-4zm100 -148h4v4h-4zm161 -21h4v4h-4zm281 275h4v4h-4zm-69 -59h4v4h-4zm-244 -196h4v4h-4zm-96 339h4v4h-4zm405 -50h4v4h-4zm-26 268h4v4h-4zm4 -448h4v4h-4zm-99 191h4v4h-4zm66 -164h4v4h-4zm72 182h4v4h-4zm-96 -257h4v4h-4zm17 -174h4v4h-4zm-97 584h4v4h-4zm-176 -539h4v4h-4zm428 704h4v4h-4zm-424 -685h4v4h-4zm111 555h4v4h-4zm63 -57h4v4h-4zm17 54h4v4h-4zm-337 -115h4v4h-4zm365 -47h4v4h-4zm-353 5h4v4h-4zm436 -132h4v4h-4zm-372 305h4v4h-4zm390 -341h4v4h-4zm-372 250h4v4h-4zm-102 -432h4v4h-4zm461 353h4v4h-4zm-386 -117h4v4h-4zm-94 -68h4v4h-4zm292 -242h4v4h-4zm-214 335h4v4h-4zm-60 -158h4v4h-4zm337 360h4v4h-4zm-530 -490h4v4h-4zm167 269h4v4h-4zm-63 -220h4v4h-4zm199 559h4v4h-4zm379 -111h4v4h-4zm-144 -65h4v4h-4zm39 -121h4v4h-4zm-561 -273h4v4h-4zm665 387h4v4h-4zm-68 92h4v4h-4zm53 -517h4v4h-4zm-365 -55h4v4h-4zm382 463h4v4h-4zm-537 -440h4v4h-4zm368 50h4v4h-4zm-136 -115h4v4h-4zm-230 266h4v4h-4zm285 544h4v4h-4zm136 -29h4v4h-4zm-462 -454h4v4h-4zm380 -191h4v4h-4zm205 716h4v4h-4zm-403 -264h4v4h-4zm396 -445h4v4h-4zm-440 488h4v4h-4zm446 -332h4v4h-4zm-176 -312h4v4h-4zm-502 122h4v4h-4zm652 165h4v4h-4zm-628 -192h4v4h-4zm190 292h4v4h-4zm-114 -276h4v4h-4zm370 553h4v4h-4zm-98 -568h4v4h-4zm334 555h4v4h-4zm-561 -633h4v4h-4zm540 183h4v4h-4zm-86 79h4v4h-4zm-52 352h4v4h-4zm-474 -569h4v4h-4zm479 452h4v4h-4zm-269 -168h4v4h-4zm385 -23h4v4h-4zm-486 -63h4v4h-4zm104 -179h4v4h-4zm213 698h4v4h-4zm197 -485h4v4h-4zm-555 -56h4v4h-4zm63 394h4v4h-4zm296 66h4v4h-4zm126 -179h4v4h-4zm12 -462h4v4h-4zm-582 2h4v4h-4zm469 59h4v4h-4zm128 -59h4v4h-4zm-423 312h4v4h-4zm85 73h4v4h-4zm-251 -344h4v4h-4zm721 628h4v4h-4zm-219 -54h4v4h-4zm-322 -188h4v4h-4zm505 244h4v4h-4zm-513 -422h4v4h-4zm53 -173h4v4h-4zm281 553h4v4h-4zm10 -439h4v4h-4zm-186 -227h4v4h-4zm70 692h4v4h-4zm-301 -681h4v4h-4zm151 435h4v4h-4zm-95 -224h4v4h-4zm188 -246h4v4h-4zm213 479h4v4h-4zm-362 175h4v4h-4zm390 96h4v4h-4zm-55 -217h4v4h-4zm-216 107h4v4h-4zm32 -632h4v4h-4zm-209 575h4v4h-4zm-37 -385h4v4h-4zm425 471h4v4h-4zm-346 -116h4v4h-4zm419 179h4v4h-4zm-384 -178h4v4h-4zm257 -83h4v4h-4zm-372 -294h4v4h-4zm414 353h4v4h-4zm-223 -539h4v4h-4zm147 764h4v4h-4zm-145 30h4v4h-4zm187 -719h4v4h-4zm-242 24h4v4h-4zm23 610h4v4h-4zm387 -460h4v4h-4zm-521 -66h4v4h-4zm375 278h4v4h-4zm83 -27h4v4h-4zm-401 247h4v4h-4zm362 -364h4v4h-4zm46 149h4v4h-4zm-623 -213h4v4h-4zm383 -215h4v4h-4zm131 324h4v4h-4zm-457 -255h4v4h-4zm0 154h4v4h-4zm447 454h4v4h-4zm165 103h4v4h-4zm-257 -772h4v4h-4zm-91 -2h4v4h-4zm143 -14h4v4h-4zm-350 141h4v4h-4zm444 68h4v4h-4zm100 359h4v4h-4zm-502 -29h4v4h-4zm55 -241h4v4h-4zm187 269h4v4h-4zm-213 -93h4v4h-4zm-73 -343h4v4h-4zm338 531h4v4h-4zm-55 -105h4v4h-4zm134 -447h4v4h-4zm-394 241h4v4h-4zm168 221h4v4h-4zm313 -367h4v4h-4zm-655 -99h4v4h-4zm181 186h4v4h-4zm27 194h4v4h-4zm-26 -360h4v4h-4zm220 -9h4v4h-4zm-69 545h4v4h-4zm-252 -506h4v4h-4zm532 12h4v4h-4zm-292 547h4v4h-4zm296 -137h4v4h-4zm-429 -70h4v4h-4zm139 -50h4v4h-4zm-44 -492h4v4h-4zm-153 445h4v4h-4zm91 146h4v4h-4zm-27 -547h4v4h-4zm271 589h4v4h-4zm34 127h4v4h-4zm-305 -346h4v4h-4zm-2 -316h4v4h-4zm223 557h4v4h-4zm-303 -317h4v4h-4zm146 -21h4v4h-4zm16 315h4v4h-4zm49 -107h4v4h-4zm-146 21h4v4h-4zm360 -472h4v4h-4zm-408 191h4v4h-4zm90 -171h4v4h-4zm409 353h4v4h-4zm-290 30h4v4h-4zm272 -55h4v4h-4zm15 38h4v4h-4zm-82 -375h4v4h-4zm-277 495h4v4h-4zm56 -428h4v4h-4zm314 303h4v4h-4zm-433 -296h4v4h-4zm80 492h4v4h-4zm326 -419h4v4h-4zm-573 12h4v4h-4zm428 354h4v4h-4zm-261 -43h4v4h-4zm93 133h4v4h-4zm-35 -87h4v4h-4zm-137 -481h4v4h-4zm-83 -5h4v4h-4zm198 508h4v4h-4zm435 -228h4v4h-4zm-451 161h4v4h-4zm509 -366h4v4h-4zm-595 -39h4v4h-4zm372 -31h4v4h-4zm176 62h4v4h-4zm-448 -131h4v4h-4zm157 662h4v4h-4zm207 -22h4v4h-4zm-10 -384h4v4h-4zm-361 -145h4v4h-4zm79 441h4v4h-4zm270 -360h4v4h-4zm-330 -118h4v4h-4zm173 596h4v4h-4zm-61 -20h4v4h-4zm164 -663h4v4h-4zm-61 605h4v4h-4zm-406 -369h4v4h-4zm199 -130h4v4h-4zm-169 89h4v4h-4zm331 -158h4v4h-4zm325 218h4v4h-4zm-586 -129h4v4h-4zm162 479h4v4h-4zm-59 -474h4v4h-4zm407 596h4v4h-4zm32 -585h4v4h-4zm-109 407h4v4h-4zm161 -328h4v4h-4zm-69 -110h4v4h-4zm-436 -116h4v4h-4zm130 13h4v4h-4zm241 209h4v4h-4zm-43 246h4v4h-4zm134 -335h4v4h-4zm-525 -101h4v4h-4zm153 68h4v4h-4zm211 409h4v4h-4zm-108 92h4v4h-4zm142 -324h4v4h-4zm-514 -33h4v4h-4zm-10 10h4v4h-4zm310 423h4v4h-4zm100 -92h4v4h-4zm-412 -522h4v4h-4zm536 81h4v4h-4zm-513 -77h4v4h-4zm597 177h4v4h-4zm-223 -263h4v4h-4zm106 760h4v4h-4zm-42 36h4v4h-4zm149 -677h4v4h-4zm-102 592h4v4h-4zm118 -53h4v4h-4zm-15 170h4v4h-4zm21 -635h4v4h-4zm-402 455h4v4h-4zm259 -104h4v4h-4zm74 -381h4v4h-4zm69 267h4v4h-4zm-399 -378h4v4h-4zm252 389h4v4h-4zm-71 -420h4v4h-4zm-281 480h4v4h-4zm394 -347h4v4h-4zm-414 -110h4v4h-4zm401 533h4v4h-4zm-449 -332h4v4h-4zm47 -151h4v4h-4zm100 44h4v4h-4zm295 584h4v4h-4zm-208 -132h4v4h-4zm-165 -42h4v4h-4zm97 -537h4v4h-4zm-6 441h4v4h-4zm-47 -48h4v4h-4zm-100 39h4v4h-4zm99 -91h4v4h-4zm322 379h4v4h-4zm10 -289h4v4h-4zm-267 30h4v4h-4zm308 97h4v4h-4zm-459 -378h4v4h-4zm442 451h4v4h-4zm119 -518h4v4h-4zm-159 370h4v4h-4zm-103 332h4v4h-4zm171 -265h4v4h-4zm-55 207h4v4h-4zm53 -333h4v4h-4zm-235 288h4v4h-4zm-174 -346h4v4h-4zm17 251h4v4h-4zm485 -31h4v4h-4zm-197 -296h4v4h-4zm167 -93h4v4h-4zm-229 556h4v4h-4zm-30 -87h4v4h-4zm-10 -108h4v4h-4zm175 -4h4v4h-4zm-161 -576h4v4h-4zm19 92h4v4h-4zm86 318h4v4h-4zm-215 73h4v4h-4zm-90 -152h4v4h-4zm-207 -150h4v4h-4zm649 129h4v4h-4zm-400 142h4v4h-4zm386 17h4v4h-4zm-76 107h4v4h-4zm0 51h4v4h-4zm-194 -531h4v4h-4zm221 40h4v4h-4zm-381 22h4v4h-4zm491 -7h4v4h-4zm-370 -120h4v4h-4zm-249 239h4v4h-4zm671 4h4v4h-4zm-85 -122h4v4h-4zm-227 -90h4v4h-4zm-198 4h4v4h-4zm296 253h4v4h-4zm-141 -171h4v4h-4zm-281 107h4v4h-4zm554 57h4v4h-4zm-55 -161h4v4h-4zm13 12h4v4h-4zm35 217h4v4h-4zm-80 -271h4v4h-4zm-272 -18h4v4h-4zm-124 -8h4v4h-4zm392 492h4v4h-4zm-463 -499h4v4h-4zm148 480h4v4h-4zm469 164h4v4h-4zm-232 -85h4v4h-4zm-491 -483h4v4h-4zm100 214h4v4h-4zm-51 -222h4v4h-4zm428 -76h4v4h-4zm-293 171h4v4h-4zm345 340h4v4h-4zm22 -133h4v4h-4zm-231 -436h4v4h-4zm283 78h4v4h-4zm5 168h4v4h-4zm-74 -120h4v4h-4zm-56 -79h4v4h-4zm145 794h4v4h-4zm-71 -512h4v4h-4zm-298 -262h4v4h-4zm81 545h4v4h-4zm202 -574h4v4h-4zm-350 373h4v4h-4zm-136 -317h4v4h-4zm398 62h4v4h-4zm-271 97h4v4h-4zm382 166h4v4h-4zm-307 17h4v4h-4zm131 -435h4v4h-4zm-324 319h4v4h-4zm203 143h4v4h-4zm244 74h4v4h-4zm-36 180h4v4h-4zm-355 -543h4v4h-4zm552 77h4v4h-4zm5 565h4v4h-4zm-416 -677h4v4h-4zm-115 -29h4v4h-4zm480 302h4v4h-4zm-554 -297h4v4h-4zm345 536h4v4h-4zm82 -652h4v4h-4zm-221 0h4v4h-4zm7 707h4v4h-4zm244 -131h4v4h-4zm-464 -521h4v4h-4zm262 710h4v4h-4zm113 -674h4v4h-4zm159 41h4v4h-4zm-455 346h4v4h-4zm61 -348h4v4h-4zm330 350h4v4h-4zm17 37h4v4h-4zm132 202h4v4h-4zm-232 -654h4v4h-4zm116 120h4v4h-4zm121 436h4v4h-4zm-70 62h4v4h-4zm107 17h4v4h-4zm-14 -544h4v4h-4zm-33 701h4v4h-4zm-414 -433h4v4h-4zm306 -415h4v4h-4zm-435 287h4v4h-4zm36 172h4v4h-4zm3 -320h4v4h-4zm407 490h4v4h-4zm-355 -195h4v4h-4zm233 -326h4v4h-4zm17 -104h4v4h-4zm185 491h4v4h-4zm-51 150h4v4h-4zm1 -485h4v4h-4zm-159 477h4v4h-4zm-249 -344h4v4h-4zm442 -107h4v4h-4zm-282 474h4v4h-4zm-144 -363h4v4h-4zm235 481h4v4h-4zm218 -240h4v4h-4zm0 -306h4v4h-4zm-324 440h4v4h-4zm-174 -382h4v4h-4zm241 440h4v4h-4zm12 -70h4v4h-4zm-222 -151h4v4h-4zm394 -427h4v4h-4zm-273 -58h4v4h-4zm-146 71h4v4h-4zm538 49h4v4h-4zm-78 196h4v4h-4zm-66 119h4v4h-4zm-231 265h4v4h-4zm-152 -625h4v4h-4zm112 395h4v4h-4zm277 233h4v4h-4zm-568 -585h4v4h-4zm364 432h4v4h-4zm-87 -13h4v4h-4zm-46 -66h4v4h-4zm-161 -334h4v4h-4zm115 -119h4v4h-4zm-105 201h4v4h-4zm288 401h4v4h-4zm-167 -222h4v4h-4zm7 -166h4v4h-4zm463 75h4v4h-4zm-129 323h4v4h-4zm-48 -200h4v4h-4zm258 263h4v4h-4zm-151 91h4v4h-4zm-481 -685h4v4h-4zm-28 84h4v4h-4zm35 -145h4v4h-4zm103 34h4v4h-4zm54 -62h4v4h-4zm353 319h4v4h-4zm-396 204h4v4h-4zm-60 -305h4v4h-4zm268 -98h4v4h-4zm-292 116h4v4h-4zm-7 180h4v4h-4zm-25 -424h4v4h-4zm480 190h4v4h-4zm-584 -122h4v4h-4zm642 167h4v4h-4zm-480 -267h4v4h-4zm229 781h4v4h-4zm-9 -142h4v4h-4zm217 -427h4v4h-4zm-464 -2h4v4h-4zm502 407h4v4h-4zm-169 -491h4v4h-4zm21 287h4v4h-4zm74 -263h4v4h-4zm-536 -18h4v4h-4zm26 14h4v4h-4zm249 586h4v4h-4zm314 -10h4v4h-4zm-515 -288h4v4h-4zm577 263h4v4h-4zm-604 -309h4v4h-4zm207 20h4v4h-4zm4 144h4v4h-4zm-145 -433h4v4h-4zm46 -44h4v4h-4zm-61 348h4v4h-4zm436 -195h4v4h-4zm37 163h4v4h-4zm-20 103h4v4h-4zm-6 54h4v4h-4zm-11 -162h4v4h-4zm-447 -160h4v4h-4zm581 75h4v4h-4zm-186 29h4v4h-4zm199 420h4v4h-4zm0 -479h4v4h-4zm-442 115h4v4h-4zm414 474h4v4h-4zm-580 -807h4v4h-4zm520 30h4v4h-4zm48 81h4v4h-4zm-332 528h4v4h-4zm364 119h4v4h-4zm-316 -51h4v4h-4zm-141 -773h4v4h-4zm289 471h4v4h-4zm170 -232h4v4h-4zm-53 -103h4v4h-4zm-493 179h4v4h-4zm-23 -273h4v4h-4zm-118 189h4v4h-4zm575 -17h4v4h-4zm-517 -22h4v4h-4zm356 431h4v4h-4zm-180 -248h4v4h-4zm-150 -39h4v4h-4zm554 5h4v4h-4zm-422 341h4v4h-4zm-34 -677h4v4h-4zm458 227h4v4h-4zm-538 218h4v4h-4zm411 271h4v4h-4zm-353 -600h4v4h-4zm286 605h4v4h-4zm-369 -244h4v4h-4zm518 -402h4v4h-4zm10 752h4v4h-4zm-543 -538h4v4h-4zm469 58h4v4h-4zm-297 327h4v4h-4zm-200 -307h4v4h-4zm347 -345h4v4h-4zm218 242h4v4h-4zm77 -10h4v4h-4zm-415 417h4v4h-4zm280 -136h4v4h-4zm-29 247h4v4h-4zm112 -500h4v4h-4zm-216 353h4v4h-4zm-363 -358h4v4h-4zm-11 -40h4v4h-4zm464 393h4v4h-4zm-36 -577h4v4h-4zm47 -33h4v4h-4zm28 769h4v4h-4zm-462 -399h4v4h-4zm42 -216h4v4h-4zm80 382h4v4h-4zm279 146h4v4h-4zm-153 -45h4v4h-4zm47 -592h4v4h-4zm-234 501h4v4h-4zm127 177h4v4h-4zm188 75h4v4h-4zm-10 -722h4v4h-4zm108 -84h4v4h-4zm-497 341h4v4h-4zm18 -43h4v4h-4zm396 -304h4v4h-4zm-361 59h4v4h-4zm246 575h4v4h-4zm-113 -29h4v4h-4zm347 -342h4v4h-4zm-563 -61h4v4h-4zm54 254h4v4h-4zm375 -19h4v4h-4zm-173 -376h4v4h-4zm16 568h4v4h-4zm-141 -474h4v4h-4zm-28 -154h4v4h-4zm130 -6h4v4h-4zm-132 45h4v4h-4zm504 93h4v4h-4zm67 108h4v4h-4zm-395 501h4v4h-4zm-317 -608h4v4h-4zm545 248h4v4h-4zm-84 212h4v4h-4zm67 -56h4v4h-4zm-202 -494h4v4h-4zm349 751h4v4h-4zm24 -541h4v4h-4zm-39 318h4v4h-4zm-459 -137h4v4h-4zm-179 -315h4v4h-4zm221 473h4v4h-4zm368 -118h4v4h-4zm-287 -391h4v4h-4zm323 304h4v4h-4zm-599 -190h4v4h-4zm507 125h4v4h-4zm-616 -224h4v4h-4zm603 250h4v4h-4zm-412 -307h4v4h-4zm-12 219h4v4h-4zm320 501h4v4h-4zm87 -239h4v4h-4zm131 -246h4v4h-4zm-3 160h4v4h-4zm-223 305h4v4h-4zm-280 -606h4v4h-4zm157 -44h4v4h-4zm181 2h4v4h-4zm-203 42h4v4h-4zm-136 331h4v4h-4zm454 383h4v4h-4zm-468 -582h4v4h-4zm516 433h4v4h-4zm-198 -49h4v4h-4zm208 42h4v4h-4zm44 12h4v4h-4zm-303 -553h4v4h-4zm24 574h4v4h-4zm171 -649h4v4h-4zm-613 -5h4v4h-4zm318 56h4v4h-4zm100 -24h4v4h-4zm-146 323h4v4h-4zm-140 24h4v4h-4zm261 189h4v4h-4zm-199 -502h4v4h-4zm-25 -107h4v4h-4zm201 722h4v4h-4zm269 -562h4v4h-4zm-502 125h4v4h-4zm64 -127h4v4h-4zm-76 219h4v4h-4zm356 116h4v4h-4zm6 -102h4v4h-4zm207 268h4v4h-4zm-296 -674h4v4h-4zm-228 177h4v4h-4zm472 -81h4v4h-4zm-60 543h4v4h-4zm79 -260h4v4h-4zm-60 21h4v4h-4zm32 368h4v4h-4zm-294 -684h4v4h-4zm155 -40h4v4h-4zm-10 664h4v4h-4zm-217 -599h4v4h-4zm399 427h4v4h-4zm-411 70h4v4h-4zm22 57h4v4h-4zm124 -689h4v4h-4zm219 512h4v4h-4zm-392 12h4v4h-4zm132 209h4v4h-4zm-295 -543h4v4h-4zm121 -2h4v4h-4zm444 44h4v4h-4zm-121 109h4v4h-4zm-127 478h4v4h-4zm129 -813h4v4h-4zm-195 629h4v4h-4zm292 44h4v4h-4zm-423 -330h4v4h-4zm381 361h4v4h-4zm-457 -257h4v4h-4zm438 -156h4v4h-4zm130 -104h4v4h-4zm-635 -76h4v4h-4zm636 199h4v4h-4zm-658 -52h4v4h-4zm515 82h4v4h-4zm-252 251h4v4h-4zm360 -354h4v4h-4zm-574 45h4v4h-4zm54 107h4v4h-4zm-88 -298h4v4h-4zm114 244h4v4h-4zm412 77h4v4h-4zm-270 236h4v4h-4zm366 -197h4v4h-4zm-335 130h4v4h-4zm365 -427h4v4h-4zm-606 62h4v4h-4zm324 582h4v4h-4zm-55 -208h4v4h-4zm146 38h4v4h-4zm110 -166h4v4h-4zm-437 -242h4v4h-4zm137 360h4v4h-4zm261 -123h4v4h-4zm-412 -348h4v4h-4zm242 -45h4v4h-4zm191 -35h4v4h-4zm-409 297h4v4h-4zm49 158h4v4h-4zm262 167h4v4h-4zm-165 113h4v4h-4zm231 -502h4v4h-4zm92 234h4v4h-4zm-421 -485h4v4h-4zm-114 62h4v4h-4zm97 474h4v4h-4zm485 -291h4v4h-4zm-184 -222h4v4h-4zm52 187h4v4h-4zm-448 179h4v4h-4zm332 -331h4v4h-4zm64 661h4v4h-4zm-194 -10h4v4h-4zm83 -116h4v4h-4zm132 -72h4v4h-4zm-337 -468h4v4h-4zm480 520h4v4h-4zm-74 -68h4v4h-4zm-211 151h4v4h-4zm226 -154h4v4h-4zm-417 -427h4v4h-4zm181 714h4v4h-4zm56 -205h4v4h-4zm80 -452h4v4h-4zm77 175h4v4h-4zm-513 -161h4v4h-4zm472 427h4v4h-4zm-134 -516h4v4h-4zm-105 518h4v4h-4zm273 -438h4v4h-4zm-549 -69h4v4h-4zm558 140h4v4h-4zm-605 -119h4v4h-4zm578 415h4v4h-4zm-310 -83h4v4h-4zm-168 -149h4v4h-4zm426 241h4v4h-4zm143 5h4v4h-4zm-243 110h4v4h-4zm-142 -178h4v4h-4zm225 -115h4v4h-4zm-59 314h4v4h-4zm176 -28h4v4h-4zm-309 -617h4v4h-4zm156 85h4v4h-4zm-236 523h4v4h-4zm78 30h4v4h-4zm321 -246h4v4h-4zm-90 9h4v4h-4zm50 400h4v4h-4zm77 -468h4v4h-4zm18 318h4v4h-4zm6 -318h4v4h-4zm-133 169h4v4h-4zm110 66h4v4h-4zm-672 -386h4v4h-4zm283 -112h4v4h-4zm222 695h4v4h-4zm-370 -459h4v4h-4zm152 -264h4v4h-4zm98 727h4v4h-4zm-115 -248h4v4h-4zm321 -454h4v4h-4zm-484 284h4v4h-4zm464 -336h4v4h-4zm-508 280h4v4h-4zm-51 -193h4v4h-4zm720 722h4v4h-4zm-533 -407h4v4h-4zm-92 -195h4v4h-4zm577 -29h4v4h-4zm-378 265h4v4h-4zm456 308h4v4h-4zm-364 -698h4v4h-4zm-161 352h4v4h-4zm10 -107h4v4h-4zm104 233h4v4h-4zm-68 64h4v4h-4zm12 -634h4v4h-4zm155 708h4v4h-4zm14 -556h4v4h-4zm149 146h4v4h-4zm-40 253h4v4h-4zm11 -296h4v4h-4zm-375 339h4v4h-4zm348 -337h4v4h-4zm-52 -108h4v4h-4zm119 247h4v4h-4zm-26 -54h4v4h-4zm-282 298h4v4h-4zm217 -562h4v4h-4zm-481 238h4v4h-4zm34 -240h4v4h-4zm88 306h4v4h-4zm444 -135h4v4h-4zm46 327h4v4h-4zm-147 -109h4v4h-4zm-149 116h4v4h-4zm-103 -150h4v4h-4zm-187 -352h4v4h-4zm54 383h4v4h-4zm-142 -364h4v4h-4zm560 80h4v4h-4zm122 278h4v4h-4zm-484 -385h4v4h-4zm382 600h4v4h-4zm-179 61h4v4h-4zm-231 -327h4v4h-4zm351 -69h4v4h-4zm48 70h4v4h-4zm-335 -268h4v4h-4zm310 216h4v4h-4zm-23 41h4v4h-4zm-370 128h4v4h-4zm533 -297h4v4h-4zm-305 -130h4v4h-4zm-257 230h4v4h-4zm432 -62h4v4h-4zm-43 537h4v4h-4zm7 33h4v4h-4zm-359 -744h4v4h-4zm104 507h4v4h-4zm407 63h4v4h-4zm-181 -30h4v4h-4zm61 -5h4v4h-4zm35 -555h4v4h-4zm47 347h4v4h-4zm-118 -92h4v4h-4zm-422 -119h4v4h-4zm570 -15h4v4h-4zm-78 267h4v4h-4zm-294 54h4v4h-4zm-163 -85h4v4h-4zm84 -380h4v4h-4zm-44 311h4v4h-4zm383 190h4v4h-4zm-435 -319h4v4h-4zm366 -231h4v4h-4zm-69 166h4v4h-4zm-433 -28h4v4h-4zm349 22h4v4h-4zm347 547h4v4h-4zm-490 -303h4v4h-4zm321 195h4v4h-4zm59 -244h4v4h-4zm-389 101h4v4h-4zm-138 -322h4v4h-4zm204 418h4v4h-4zm324 -469h4v4h-4zm32 31h4v4h-4zm-428 -13h4v4h-4zm376 54h4v4h-4zm176 52h4v4h-4zm-83 146h4v4h-4zm-96 -322h4v4h-4zm-363 523h4v4h-4zm224 72h4v4h-4zm-10 -498h4v4h-4zm41 620h4v4h-4zm-218 -217h4v4h-4zm467 -407h4v4h-4zm-167 444h4v4h-4zm173 125h4v4h-4zm-92 -155h4v4h-4zm86 8h4v4h-4zm-481 -115h4v4h-4zm225 401h4v4h-4zm39 -765h4v4h-4zm234 249h4v4h-4zm-143 78h4v4h-4zm8 -32h4v4h-4zm-341 -286h4v4h-4zm315 584h4v4h-4zm-244 -573h4v4h-4zm53 695h4v4h-4zm-84 -117h4v4h-4zm-7 -177h4v4h-4zm400 2h4v4h-4zm-294 170h4v4h-4zm369 -360h4v4h-4zm-86 372h4v4h-4zm-11 -547h4v4h-4zm-312 -24h4v4h-4zm292 -55h4v4h-4zm-86 19h4v4h-4zm-479 133h4v4h-4zm220 -94h4v4h-4zm355 549h4v4h-4zm-361 -488h4v4h-4zm254 -45h4v4h-4zm-410 151h4v4h-4zm3 -85h4v4h-4zm492 317h4v4h-4zm-122 -129h4v4h-4zm-182 -230h4v4h-4zm343 71h4v4h-4zm-459 126h4v4h-4zm343 271h4v4h-4zm-31 -552h4v4h-4zm54 546h4v4h-4zm-294 -563h4v4h-4zm229 48h4v4h-4zm-360 320h4v4h-4zm176 56h4v4h-4zm-81 -210h4v4h-4zm276 549h4v4h-4zm-150 -42h4v4h-4zm-186 -318h4v4h-4zm69 -277h4v4h-4zm-30 -87h4v4h-4zm272 566h4v4h-4zm-378 -535h4v4h-4zm273 -24h4v4h-4zm348 749h4v4h-4zm-565 -432h4v4h-4zm376 179h4v4h-4zm-421 -540h4v4h-4zm307 96h4v4h-4zm-43 -117h4v4h-4zm-118 337h4v4h-4zm303 426h4v4h-4zm-167 -28h4v4h-4zm-178 -334h4v4h-4zm-12 123h4v4h-4zm195 192h4v4h-4zm-49 -660h4v4h-4zm-156 484h4v4h-4zm535 89h4v4h-4zm-299 188h4v4h-4zm236 -481h4v4h-4zm-401 333h4v4h-4zm-66 -553h4v4h-4zm-71 100h4v4h-4zm476 612h4v4h-4zm116 -536h4v4h-4zm-9 -175h4v4h-4zm-134 -20h4v4h-4zm32 541h4v4h-4zm-249 -8h4v4h-4zm-224 -492h4v4h-4zm116 515h4v4h-4zm14 -561h4v4h-4zm438 699h4v4h-4zm-214 -172h4v4h-4zm-296 -344h4v4h-4zm502 89h4v4h-4zm-511 -318h4v4h-4zm57 528h4v4h-4zm133 -599h4v4h-4zm301 163h4v4h-4zm-394 361h4v4h-4zm-263 -426h4v4h-4zm178 251h4v4h-4zm439 -117h4v4h-4zm-123 -174h4v4h-4zm194 746h4v4h-4zm-414 -684h4v4h-4zm120 495h4v4h-4zm225 -476h4v4h-4zm-367 236h4v4h-4zm100 -340h4v4h-4zm331 330h4v4h-4zm-114 -238h4v4h-4zm-505 219h4v4h-4zm563 -240h4v4h-4zm-22 -9h4v4h-4zm-495 188h4v4h-4zm455 -203h4v4h-4zm-278 430h4v4h-4zm-108 -258h4v4h-4zm522 519h4v4h-4zm-712 -657h4v4h-4zm561 20h4v4h-4zm47 486h4v4h-4zm-233 145h4v4h-4zm278 -332h4v4h-4zm16 0h4v4h-4zm-370 -24h4v4h-4zm406 -205h4v4h-4zm-340 579h4v4h-4zm-230 -674h4v4h-4zm130 423h4v4h-4zm480 205h4v4h-4zm-17 -7h4v4h-4zm-581 -507h4v4h-4zm431 413h4v4h-4zm-68 208h4v4h-4zm-382 -537h4v4h-4zm126 91h4v4h-4zm-139 -240h4v4h-4zm124 419h4v4h-4zm420 140h4v4h-4zm-432 -301h4v4h-4zm95 203h4v4h-4zm319 -227h4v4h-4zm-91 -310h4v4h-4zm58 430h4v4h-4zm-561 -371h4v4h-4zm525 46h4v4h-4zm-310 -99h4v4h-4zm-69 422h4v4h-4zm-48 -222h4v4h-4zm100 147h4v4h-4zm368 324h4v4h-4zm-387 -184h4v4h-4zm4 -481h4v4h-4zm187 737h4v4h-4zm-41 -216h4v4h-4zm-381 -464h4v4h-4zm254 -13h4v4h-4zm286 -34h4v4h-4zm-222 7h4v4h-4zm-200 275h4v4h-4zm604 -156h4v4h-4zm-175 -209h4v4h-4zm-318 88h4v4h-4zm436 29h4v4h-4zm31 486h4v4h-4zm-351 -66h4v4h-4zm145 -156h4v4h-4zm80 -128h4v4h-4zm-406 100h4v4h-4zm546 -180h4v4h-4zm-560 119h4v4h-4zm198 -186h4v4h-4zm135 -49h4v4h-4zm190 401h4v4h-4zm-396 80h4v4h-4zm194 222h4v4h-4zm28 -107h4v4h-4zm-217 39h4v4h-4zm270 85h4v4h-4zm-412 -517h4v4h-4zm186 473h4v4h-4zm-180 -284h4v4h-4zm351 265h4v4h-4zm-300 -124h4v4h-4zm520 -368h4v4h-4zm-169 -79h4v4h-4zm-114 -127h4v4h-4zm216 417h4v4h-4zm-20 -189h4v4h-4zm-60 -14h4v4h-4zm106 146h4v4h-4zm-345 184h4v4h-4zm49 -500h4v4h-4zm299 785h4v4h-4zm-568 -438h4v4h-4zm461 339h4v4h-4zm109 -114h4v4h-4zm-7 -383h4v4h-4zm-84 329h4v4h-4zm-220 17h4v4h-4zm261 -418h4v4h-4zm-20 286h4v4h-4zm-33 235h4v4h-4zm-356 -489h4v4h-4zm-71 306h4v4h-4zm422 70h4v4h-4zm-97 -496h4v4h-4zm-311 183h4v4h-4zm22 -166h4v4h-4zm155 -56h4v4h-4zm94 694h4v4h-4zm-14 -672h4v4h-4zm-98 360h4v4h-4zm312 409h4v4h-4zm-433 -369h4v4h-4zm268 -144h4v4h-4zm-37 364h4v4h-4zm-242 -539h4v4h-4zm-13 223h4v4h-4zm63 279h4v4h-4zm55 -664h4v4h-4zm336 311h4v4h-4zm-503 66h4v4h-4zm124 -206h4v4h-4zm151 523h4v4h-4zm15 115h4v4h-4zm316 28h4v4h-4zm-160 -615h4v4h-4zm-408 28h4v4h-4zm226 332h4v4h-4zm257 -399h4v4h-4zm-136 -97h4v4h-4zm205 755h4v4h-4zm-265 -691h4v4h-4zm-283 285h4v4h-4zm493 -189h4v4h-4zm-67 -128h4v4h-4zm0 -9h4v4h-4zm66 178h4v4h-4zm-101 454h4v4h-4zm-20 -83h4v4h-4zm-501 -431h4v4h-4zm140 -21h4v4h-4zm403 -62h4v4h-4zm-370 458h4v4h-4zm264 -580h4v4h-4zm165 306h4v4h-4zm-180 270h4v4h-4zm42 -204h4v4h-4zm41 -341h4v4h-4zm-73 541h4v4h-4zm-6 81h4v4h-4zm-233 -18h4v4h-4zm443 -51h4v4h-4zm-57 -179h4v4h-4zm-88 -65h4v4h-4zm216 436h4v4h-4zm-464 -396h4v4h-4zm15 300h4v4h-4zm377 -307h4v4h-4zm-50 -150h4v4h-4zm-186 -160h4v4h-4zm-126 -17h4v4h-4zm433 702h4v4h-4zm-150 -590h4v4h-4zm-515 -101h4v4h-4zm540 426h4v4h-4zm-269 -428h4v4h-4zm142 290h4v4h-4zm-453 -120h4v4h-4zm596 -23h4v4h-4zm-44 397h4v4h-4zm111 -398h4v4h-4zm29 -56h4v4h-4zm-428 -103h4v4h-4zm-3 356h4v4h-4zm273 264h4v4h-4zm-4 -205h4v4h-4zm133 248h4v4h-4zm-485 -596h4v4h-4zm247 518h4v4h-4zm-280 -567h4v4h-4zm140 643h4v4h-4zm-194 -516h4v4h-4zm143 176h4v4h-4zm97 -347h4v4h-4zm122 540h4v4h-4zm-267 48h4v4h-4zm77 -52h4v4h-4zm-75 -584h4v4h-4zm76 121h4v4h-4zm364 433h4v4h-4zm-402 -486h4v4h-4zm292 592h4v4h-4zm-52 -81h4v4h-4zm-351 -221h4v4h-4zm340 60h4v4h-4zm111 -287h4v4h-4zm-217 552h4v4h-4zm-303 -551h4v4h-4zm357 539h4v4h-4zm153 -21h4v4h-4zm-132 -622h4v4h-4zm-86 77h4v4h-4zm47 -62h4v4h-4zm-22 697h4v4h-4zm-304 -382h4v4h-4zm366 -362h4v4h-4zm-316 507h4v4h-4zm388 -57h4v4h-4zm-508 -298h4v4h-4zm183 424h4v4h-4zm526 281h4v4h-4zm-183 -109h4v4h-4zm-340 -495h4v4h-4zm-150 -163h4v4h-4zm148 13h4v4h-4zm85 458h4v4h-4zm16 -49h4v4h-4zm338 -121h4v4h-4zm17 205h4v4h-4zm26 -418h4v4h-4zm-179 -93h4v4h-4zm234 734h4v4h-4zm-492 -313h4v4h-4zm-34 1h4v4h-4zm-25 -123h4v4h-4zm363 -195h4v4h-4zm49 210h4v4h-4zm-374 260h4v4h-4zm291 -246h4v4h-4zm-438 -360h4v4h-4zm313 790h4v4h-4zm-374 -661h4v4h-4zm641 100h4v4h-4zm-47 73h4v4h-4zm41 399h4v4h-4zm-222 -720h4v4h-4zm187 345h4v4h-4zm-69 -215h4v4h-4zm-46 507h4v4h-4zm-279 -139h4v4h-4zm21 16h4v4h-4zm353 -180h4v4h-4zm-562 -280h4v4h-4zm252 463h4v4h-4zm243 -129h4v4h-4zm-351 26h4v4h-4zm350 177h4v4h-4zm-164 55h4v4h-4zm131 -526h4v4h-4zm-206 -125h4v4h-4zm-71 352h4v4h-4zm432 278h4v4h-4zm-487 -336h4v4h-4zm235 -287h4v4h-4zm160 183h4v4h-4zm-180 -214h4v4h-4zm178 107h4v4h-4zm-447 -13h4v4h-4zm525 41h4v4h-4zm-441 112h4v4h-4zm299 -186h4v4h-4zm-304 526h4v4h-4zm-71 -246h4v4h-4zm352 278h4v4h-4zm-21 212h4v4h-4zm215 -343h4v4h-4zm77 307h4v4h-4zm-136 -19h4v4h-4zm-145 -647h4v4h-4zm211 197h4v4h-4zm-432 -168h4v4h-4zm-162 97h4v4h-4zm658 470h4v4h-4zm-473 -320h4v4h-4zm-157 -343h4v4h-4zm404 686h4v4h-4zm-302 -324h4v4h-4zm454 155h4v4h-4zm-416 -509h4v4h-4zm76 686h4v4h-4zm327 -592h4v4h-4zm-616 21h4v4h-4zm532 252h4v4h-4zm-370 48h4v4h-4zm505 245h4v4h-4zm-378 -72h4v4h-4zm95 -662h4v4h-4zm231 181h4v4h-4zm-493 319h4v4h-4zm90 -482h4v4h-4zm242 321h4v4h-4zm249 354h4v4h-4zm-358 -565h4v4h-4zm-123 -25h4v4h-4zm412 13h4v4h-4zm-646 104h4v4h-4zm589 175h4v4h-4zm-122 -67h4v4h-4zm59 3h4v4h-4zm-407 19h4v4h-4zm530 -183h4v4h-4zm-416 340h4v4h-4zm389 -359h4v4h-4zm-40 -119h4v4h-4zm-204 634h4v4h-4zm-184 -365h4v4h-4zm-47 167h4v4h-4zm353 -367h4v4h-4zm61 336h4v4h-4zm-489 -379h4v4h-4zm582 198h4v4h-4zm-168 219h4v4h-4zm230 249h4v4h-4zm-2 -457h4v4h-4zm-518 -127h4v4h-4zm59 387h4v4h-4zm-109 -287h4v4h-4zm347 498h4v4h-4zm-361 -212h4v4h-4zm171 109h4v4h-4zm355 35h4v4h-4zm-163 -37h4v4h-4zm-74 -509h4v4h-4zm71 379h4v4h-4zm-13 178h4v4h-4zm-278 -361h4v4h-4zm293 287h4v4h-4zm-354 -408h4v4h-4zm122 343h4v4h-4zm289 -218h4v4h-4zm-479 -126h4v4h-4zm553 486h4v4h-4zm-555 -446h4v4h-4zm164 -107h4v4h-4zm-229 -39h4v4h-4zm-34 84h4v4h-4zm377 -124h4v4h-4zm-223 436h4v4h-4zm-106 -305h4v4h-4zm515 105h4v4h-4zm117 -46h4v4h-4zm-438 -51h4v4h-4zm-32 186h4v4h-4zm148 347h4v4h-4zm-123 -204h4v4h-4zm339 86h4v4h-4zm163 -294h4v4h-4zm-130 371h4v4h-4zm-353 -247h4v4h-4zm155 273h4v4h-4zm126 -306h4v4h-4zm-108 -346h4v4h-4zm239 338h4v4h-4zm-330 310h4v4h-4zm382 147h4v4h-4zm-434 -716h4v4h-4zm-79 156h4v4h-4zm275 -244h4v4h-4zm124 604h4v4h-4zm-405 -493h4v4h-4zm324 -127h4v4h-4zm-138 579h4v4h-4zm340 130h4v4h-4zm-66 125h4v4h-4zm-233 -782h4v4h-4zm93 516h4v4h-4zm-433 -489h4v4h-4zm480 635h4v4h-4zm-456 -403h4v4h-4zm548 -17h4v4h-4zm-10 -220h4v4h-4zm24 722h4v4h-4zm-86 -621h4v4h-4zm47 -71h4v4h-4zm-546 205h4v4h-4zm34 99h4v4h-4zm73 188h4v4h-4zm389 -186h4v4h-4zm-379 -70h4v4h-4zm-141 -109h4v4h-4zm538 -209h4v4h-4zm66 671h4v4h-4zm56 -475h4v4h-4zm-208 143h4v4h-4zm-239 -370h4v4h-4zm56 45h4v4h-4zm259 420h4v4h-4zm10 -296h4v4h-4zm-157 600h4v4h-4zm221 -671h4v4h-4zm-365 47h4v4h-4zm372 251h4v4h-4zm-285 -333h4v4h-4zm198 558h4v4h-4zm-344 -303h4v4h-4zm435 212h4v4h-4zm-123 -443h4v4h-4zm34 8h4v4h-4zm-456 -16h4v4h-4zm283 -102h4v4h-4zm255 629h4v4h-4zm-275 -590h4v4h-4zm-252 171h4v4h-4zm397 553h4v4h-4zm156 -113h4v4h-4zm-204 -254h4v4h-4zm-359 -301h4v4h-4zm395 413h4v4h-4zm-400 -247h4v4h-4zm112 328h4v4h-4zm228 -568h4v4h-4zm-227 69h4v4h-4zm-112 46h4v4h-4zm527 98h4v4h-4zm-204 -131h4v4h-4zm160 69h4v4h-4zm-341 -135h4v4h-4zm68 729h4v4h-4zm-23 -669h4v4h-4zm200 686h4v4h-4zm55 -131h4v4h-4zm-376 -250h4v4h-4zm-79 -37h4v4h-4zm154 -239h4v4h-4zm-8 581h4v4h-4zm-162 -517h4v4h-4zm623 672h4v4h-4zm-204 -413h4v4h-4zm-312 -329h4v4h-4zm292 656h4v4h-4zm-376 -405h4v4h-4zm494 -95h4v4h-4zm-66 -209h4v4h-4zm-42 53h4v4h-4zm-126 664h4v4h-4zm61 -17h4v4h-4zm-215 -459h4v4h-4zm276 118h4v4h-4zm-67 375h4v4h-4zm129 -783h4v4h-4zm-399 125h4v4h-4zm413 -5h4v4h-4zm-504 226h4v4h-4zm298 368h4v4h-4zm-270 -412h4v4h-4zm340 483h4v4h-4zm-81 -791h4v4h-4zm-226 227h4v4h-4zm468 483h4v4h-4zm25 -205h4v4h-4zm-439 -348h4v4h-4zm37 321h4v4h-4zm32 -483h4v4h-4zm-114 38h4v4h-4zm305 752h4v4h-4zm-263 -728h4v4h-4zm551 638h4v4h-4zm-55 116h4v4h-4zm-425 -432h4v4h-4zm-149 -294h4v4h-4zm480 458h4v4h-4zm-62 -411h4v4h-4zm82 359h4v4h-4zm52 387h4v4h-4zm-368 -750h4v4h-4zm-20 510h4v4h-4zm363 -351h4v4h-4zm-369 90h4v4h-4zm326 113h4v4h-4zm-413 30h4v4h-4zm157 -470h4v4h-4zm54 113h4v4h-4zm-5 523h4v4h-4zm142 88h4v4h-4zm130 -90h4v4h-4zm-386 -186h4v4h-4zm106 137h4v4h-4zm-13 83h4v4h-4zm-150 -316h4v4h-4zm-10 213h4v4h-4zm490 -275h4v4h-4zm-655 -200h4v4h-4zm314 645h4v4h-4zm145 -418h4v4h-4zm-267 -322h4v4h-4zm463 155h4v4h-4zm-216 -65h4v4h-4zm-463 33h4v4h-4zm574 196h4v4h-4zm105 319h4v4h-4zm-399 -216h4v4h-4zm172 157h4v4h-4zm-331 -272h4v4h-4zm472 -65h4v4h-4zm-414 74h4v4h-4zm440 -67h4v4h-4zm-230 -184h4v4h-4zm227 270h4v4h-4zm-399 -213h4v4h-4zm61 -176h4v4h-4zm-1 667h4v4h-4zm-82 -339h4v4h-4zm178 299h4v4h-4zm-375 -376h4v4h-4zm212 299h4v4h-4zm350 -180h4v4h-4zm-488 -138h4v4h-4zm358 -226h4v4h-4zm-94 626h4v4h-4zm29 -9h4v4h-4zm-150 -258h4v4h-4zm-35 -146h4v4h-4zm450 33h4v4h-4zm-78 204h4v4h-4zm-123 -286h4v4h-4zm-345 77h4v4h-4zm288 -112h4v4h-4zm174 391h4v4h-4zm-56 178h4v4h-4zm143 83h4v4h-4zm-437 -548h4v4h-4zm339 82h4v4h-4zm59 481h4v4h-4zm-455 -372h4v4h-4zm-60 -274h4v4h-4zm122 412h4v4h-4zm444 -338h4v4h-4zm-166 466h4v4h-4zm-42 -631h4v4h-4zm-475 50h4v4h-4zm232 -27h4v4h-4zm94 493h4v4h-4zm-121 -261h4v4h-4zm366 443h4v4h-4zm47 -174h4v4h-4zm-220 105h4v4h-4zm203 -436h4v4h-4zm-195 -185h4v4h-4zm170 223h4v4h-4zm-354 241h4v4h-4zm125 -397h4v4h-4zm245 543h4v4h-4zm136 -27h4v4h-4zm-83 -471h4v4h-4zm-415 -159h4v4h-4zm-76 485h4v4h-4zm361 171h4v4h-4zm200 -381h4v4h-4zm33 391h4v4h-4zm-242 -88h4v4h-4zm-430 -338h4v4h-4zm157 -92h4v4h-4zm345 435h4v4h-4zm-111 101h4v4h-4zm183 -426h4v4h-4zm9 563h4v4h-4zm-37 -611h4v4h-4zm-429 100h4v4h-4zm402 129h4v4h-4zm-114 361h4v4h-4zm-190 -782h4v4h-4zm-136 437h4v4h-4zm530 262h4v4h-4zm-72 -494h4v4h-4zm-514 -189h4v4h-4zm539 51h4v4h-4zm-87 226h4v4h-4zm-357 91h4v4h-4zm277 352h4v4h-4zm36 -629h4v4h-4zm-287 431h4v4h-4zm59 -219h4v4h-4zm-215 -200h4v4h-4zm158 97h4v4h-4zm83 350h4v4h-4zm-245 -432h4v4h-4zm567 568h4v4h-4zm-232 -624h4v4h-4zm195 277h4v4h-4zm134 301h4v4h-4zm-40 -277h4v4h-4zm-93 -351h4v4h-4zm-306 39h4v4h-4zm29 339h4v4h-4zm-185 -35h4v4h-4zm504 1h4v4h-4zm-373 -12h4v4h-4zm-65 187h4v4h-4zm-157 -451h4v4h-4zm632 272h4v4h-4zm-31 -122h4v4h-4zm-310 -151h4v4h-4zm346 642h4v4h-4zm-466 -761h4v4h-4zm209 813h4v4h-4zm-376 -638h4v4h-4zm483 447h4v4h-4zm-52 72h4v4h-4zm-11 10h4v4h-4zm-85 -75h4v4h-4zm-44 -60h4v4h-4zm301 -391h4v4h-4zm-473 62h4v4h-4zm68 279h4v4h-4zm462 -293h4v4h-4zm42 396h4v4h-4zm-128 137h4v4h-4zm-336 -364h4v4h-4zm227 -310h4v4h-4zm-58 527h4v4h-4zm-264 -451h4v4h-4zm54 -170h4v4h-4zm198 588h4v4h-4zm185 -147h4v4h-4zm95 310h4v4h-4zm-366 -151h4v4h-4zm-79 -197h4v4h-4zm-86 -313h4v4h-4zm73 300h4v4h-4zm207 194h4v4h-4zm210 261h4v4h-4zm-471 -817h4v4h-4zm347 602h4v4h-4zm85 -117h4v4h-4zm-553 -201h4v4h-4zm231 -241h4v4h-4zm-5 592h4v4h-4zm384 198h4v4h-4zm-425 -768h4v4h-4zm456 20h4v4h-4zm-18 222h4v4h-4zm27 379h4v4h-4zm-570 -535h4v4h-4zm272 564h4v4h-4zm299 -68h4v4h-4zm-156 -5h4v4h-4zm100 -281h4v4h-4zm-604 -96h4v4h-4zm516 548h4v4h-4zm-278 -424h4v4h-4zm152 302h4v4h-4zm-258 -352h4v4h-4zm450 245h4v4h-4zm-303 56h4v4h-4zm-264 -605h4v4h-4zm433 573h4v4h-4zm-59 -12h4v4h-4zm-261 -424h4v4h-4zm508 214h4v4h-4zm-621 -93h4v4h-4zm177 22h4v4h-4zm107 354h4v4h-4zm-82 -304h4v4h-4zm308 -26h4v4h-4zm97 227h4v4h-4zm-414 -15h4v4h-4zm-119 -96h4v4h-4zm506 -47h4v4h-4zm-655 -296h4v4h-4zm155 93h4v4h-4zm411 95h4v4h-4zm-193 267h4v4h-4zm-107 82h4v4h-4zm12 -515h4v4h-4zm337 294h4v4h-4zm-467 -144h4v4h-4zm32 -190h4v4h-4zm460 690h4v4h-4zm-392 -217h4v4h-4zm-29 -89h4v4h-4zm471 -129h4v4h-4zm-276 370h4v4h-4zm-235 -583h4v4h-4zm-100 73h4v4h-4zm427 100h4v4h-4zm-101 -293h4v4h-4zm-139 74h4v4h-4zm-202 97h4v4h-4zm558 478h4v4h-4zm-111 -126h4v4h-4zm119 -327h4v4h-4zm14 -193h4v4h-4zm-423 332h4v4h-4zm-20 6h4v4h-4zm492 -202h4v4h-4zm-551 143h4v4h-4zm468 -275h4v4h-4zm-463 58h4v4h-4zm315 -74h4v4h-4zm-376 304h4v4h-4zm253 -308h4v4h-4zm-301 116h4v4h-4zm440 -14h4v4h-4zm-107 520h4v4h-4zm158 -39h4v4h-4zm-146 -473h4v4h-4zm78 439h4v4h-4zm50 -592h4v4h-4zm-111 635h4v4h-4zm-287 -420h4v4h-4zm449 -39h4v4h-4zm-476 130h4v4h-4zm23 -112h4v4h-4zm572 652h4v4h-4zm-142 -42h4v4h-4zm-248 -305h4v4h-4zm140 244h4v4h-4zm176 5h4v4h-4zm145 -518h4v4h-4zm-139 108h4v4h-4zm-323 254h4v4h-4zm343 59h4v4h-4zm-514 -268h4v4h-4zm-44 -166h4v4h-4zm317 -50h4v4h-4zm-126 315h4v4h-4zm42 -89h4v4h-4zm297 230h4v4h-4zm-153 136h4v4h-4zm135 29h4v4h-4zm106 -412h4v4h-4zm-106 387h4v4h-4zm-26 -355h4v4h-4zm176 -126h4v4h-4zm-8 44h4v4h-4zm-118 388h4v4h-4zm-40 -141h4v4h-4zm31 133h4v4h-4zm125 -556h4v4h-4zm-678 81h4v4h-4zm324 -102h4v4h-4zm186 253h4v4h-4zm-546 -237h4v4h-4zm717 553h4v4h-4zm-106 -92h4v4h-4zm-393 -153h4v4h-4zm427 -300h4v4h-4zm-26 -85h4v4h-4zm-540 302h4v4h-4zm458 -72h4v4h-4zm-75 -136h4v4h-4zm143 150h4v4h-4zm-460 76h4v4h-4zm85 210h4v4h-4zm142 209h4v4h-4zm-89 -770h4v4h-4zm195 713h4v4h-4zm47 -23h4v4h-4zm-428 -428h4v4h-4zm401 482h4v4h-4zm-81 -90h4v4h-4zm228 -483h4v4h-4zm-45 235h4v4h-4zm-106 -359h4v4h-4zm-198 591h4v4h-4zm-287 -549h4v4h-4zm511 452h4v4h-4zm-239 -100h4v4h-4zm-125 -78h4v4h-4zm162 265h4v4h-4zm345 -314h4v4h-4zm-561 -205h4v4h-4zm-14 165h4v4h-4zm497 519h4v4h-4zm-153 -812h4v4h-4zm-319 118h4v4h-4zm239 454h4v4h-4zm62 221h4v4h-4zm-1 -80h4v4h-4zm-286 -649h4v4h-4zm576 165h4v4h-4zm-84 71h4v4h-4zm-348 226h4v4h-4zm236 -420h4v4h-4zm-164 455h4v4h-4zm-124 -18h4v4h-4zm295 169h4v4h-4zm71 -109h4v4h-4zm-33 -4h4v4h-4zm-12 161h4v4h-4zm-21 -751h4v4h-4zm-472 185h4v4h-4zm185 181h4v4h-4zm7 -193h4v4h-4zm-112 -57h4v4h-4zm563 539h4v4h-4zm-446 -217h4v4h-4zm262 331h4v4h-4zm135 29h4v4h-4zm-513 -713h4v4h-4zm366 -58h4v4h-4zm-155 665h4v4h-4zm245 -107h4v4h-4zm121 178h4v4h-4zm-507 -316h4v4h-4zm228 -364h4v4h-4zm48 551h4v4h-4zm49 -618h4v4h-4zm-74 688h4v4h-4zm226 -203h4v4h-4zm-451 19h4v4h-4zm113 -412h4v4h-4zm-37 20h4v4h-4zm303 -122h4v4h-4zm-374 85h4v4h-4zm135 697h4v4h-4zm-6 -66h4v4h-4zm290 -124h4v4h-4zm-138 -51h4v4h-4zm209 100h4v4h-4zm-662 -420h4v4h-4zm514 384h4v4h-4zm-365 -510h4v4h-4zm43 198h4v4h-4zm-37 -283h4v4h-4zm-124 277h4v4h-4zm29 31h4v4h-4zm335 337h4v4h-4zm-199 -582h4v4h-4zm441 271h4v4h-4zm-42 64h4v4h-4zm-362 -364h4v4h-4zm-90 229h4v4h-4zm113 294h4v4h-4zm-23 -572h4v4h-4zm329 632h4v4h-4zm-338 -541h4v4h-4zm197 -109h4v4h-4zm187 816h4v4h-4zm-199 -235h4v4h-4zm-357 -264h4v4h-4zm576 427h4v4h-4zm-462 -418h4v4h-4zm439 546h4v4h-4zm-272 -131h4v4h-4zm132 -234h4v4h-4zm-186 107h4v4h-4zm113 195h4v4h-4zm82 -244h4v4h-4zm19 11h4v4h-4zm-297 -507h4v4h-4zm317 483h4v4h-4zm-464 -210h4v4h-4zm-7 17h4v4h-4zm366 349h4v4h-4zm138 -306h4v4h-4zm-90 -102h4v4h-4zm-250 104h4v4h-4zm412 382h4v4h-4zm-199 -668h4v4h-4zm257 70h4v4h-4zm-537 212h4v4h-4zm314 -85h4v4h-4zm-56 -185h4v4h-4zm184 605h4v4h-4zm-220 15h4v4h-4zm-241 -189h4v4h-4zm196 -555h4v4h-4zm-149 -5h4v4h-4zm-76 261h4v4h-4zm84 -60h4v4h-4zm269 255h4v4h-4zm-105 319h4v4h-4zm253 -91h4v4h-4zm-408 -265h4v4h-4zm448 411h4v4h-4zm-140 -830h4v4h-4zm-334 340h4v4h-4zm425 524h4v4h-4zm-59 -781h4v4h-4zm-91 23h4v4h-4zm77 568h4v4h-4zm-45 -220h4v4h-4zm-180 -441h4v4h-4zm386 753h4v4h-4zm-122 -657h4v4h-4zm-44 501h4v4h-4zm-490 -259h4v4h-4zm371 242h4v4h-4zm228 -152h4v4h-4zm-57 -210h4v4h-4zm-310 436h4v4h-4zm310 -103h4v4h-4zm49 14h4v4h-4zm-630 -506h4v4h-4zm82 228h4v4h-4zm88 244h4v4h-4zm331 211h4v4h-4zm-363 -190h4v4h-4zm213 127h4v4h-4zm-166 -390h4v4h-4zm490 543h4v4h-4zm-576 -825h4v4h-4zm21 515h4v4h-4zm418 -250h4v4h-4zm-466 -133h4v4h-4zm175 -111h4v4h-4zm183 61h4v4h-4zm163 557h4v4h-4zm-459 -423h4v4h-4zm442 604h4v4h-4zm-287 -781h4v4h-4zm-280 179h4v4h-4zm607 178h4v4h-4zm33 185h4v4h-4zm-303 -600h4v4h-4zm-381 113h4v4h-4zm425 -2h4v4h-4zm266 141h4v4h-4zm17 609h4v4h-4zm-222 -748h4v4h-4zm-55 32h4v4h-4zm-259 152h4v4h-4zm517 -116h4v4h-4zm-213 -142h4v4h-4zm-312 -22h4v4h-4zm75 442h4v4h-4zm405 183h4v4h-4zm-150 -40h4v4h-4zm93 15h4v4h-4zm55 -302h4v4h-4zm-5 169h4v4h-4zm-23 -135h4v4h-4zm-414 296h4v4h-4zm-61 -631h4v4h-4zm441 27h4v4h-4zm-271 483h4v4h-4zm91 -431h4v4h-4zm-66 16h4v4h-4zm262 619h4v4h-4zm44 -538h4v4h-4zm-69 -51h4v4h-4zm-196 -108h4v4h-4zm132 719h4v4h-4zm-290 -128h4v4h-4zm376 -352h4v4h-4zm36 362h4v4h-4zm40 118h4v4h-4zm-37 -470h4v4h-4zm10 168h4v4h-4zm49 428h4v4h-4zm-294 -225h4v4h-4zm-168 -165h4v4h-4zm-11 -286h4v4h-4zm-67 304h4v4h-4zm508 135h4v4h-4zm-77 -353h4v4h-4zm-134 341h4v4h-4zm179 -516h4v4h-4zm-125 497h4v4h-4zm-208 111h4v4h-4zm-57 -618h4v4h-4zm103 -74h4v4h-4zm367 593h4v4h-4zm-89 -92h4v4h-4zm-409 -101h4v4h-4zm121 -431h4v4h-4zm-270 182h4v4h-4zm567 -104h4v4h-4zm-6 137h4v4h-4zm-83 -108h4v4h-4zm98 195h4v4h-4zm-298 -225h4v4h-4zm309 320h4v4h-4zm-193 -273h4v4h-4zm144 441h4v4h-4zm61 -373h4v4h-4zm-346 -175h4v4h-4zm236 288h4v4h-4zm73 -172h4v4h-4zm36 211h4v4h-4zm-474 -150h4v4h-4zm524 441h4v4h-4zm-51 -301h4v4h-4zm-447 -310h4v4h-4zm322 723h4v4h-4zm58 -264h4v4h-4zm-386 -317h4v4h-4zm-48 305h4v4h-4zm485 -319h4v4h-4zm-44 230h4v4h-4zm-265 63h4v4h-4zm105 250h4v4h-4zm55 -376h4v4h-4zm-21 -175h4v4h-4zm-211 315h4v4h-4zm-133 -406h4v4h-4zm183 4h4v4h-4zm-209 -4h4v4h-4zm76 329h4v4h-4zm294 345h4v4h-4zm-233 -650h4v4h-4zm-97 144h4v4h-4zm387 475h4v4h-4zm-355 -241h4v4h-4zm-101 -330h4v4h-4zm660 91h4v4h-4zm-447 -54h4v4h-4zm370 92h4v4h-4zm-263 457h4v4h-4zm257 28h4v4h-4zm-390 -141h4v4h-4zm340 -279h4v4h-4zm-419 -239h4v4h-4zm393 238h4v4h-4zm96 290h4v4h-4zm-115 49h4v4h-4zm-48 -301h4v4h-4zm29 165h4v4h-4zm150 53h4v4h-4zm-372 -138h4v4h-4zm334 -269h4v4h-4zm-105 548h4v4h-4zm-438 -307h4v4h-4zm-44 -246h4v4h-4zm280 402h4v4h-4zm324 -109h4v4h-4zm73 375h4v4h-4zm-133 -448h4v4h-4zm-72 267h4v4h-4zm-98 -27h4v4h-4zm-112 -611h4v4h-4zm327 782h4v4h-4zm-344 -341h4v4h-4zm104 -310h4v4h-4zm133 199h4v4h-4zm-118 -200h4v4h-4zm-73 462h4v4h-4zm329 -382h4v4h-4zm-421 192h4v4h-4zm326 -77h4v4h-4zm-7 -307h4v4h-4zm-189 787h4v4h-4zm317 -486h4v4h-4zm-536 45h4v4h-4zm-120 -278h4v4h-4zm482 562h4v4h-4zm-347 -383h4v4h-4zm529 -94h4v4h-4zm-1 158h4v4h-4zm-24 206h4v4h-4zm-494 -57h4v4h-4zm292 277h4v4h-4zm-117 -15h4v4h-4zm-202 -345h4v4h-4zm243 223h4v4h-4zm37 -502h4v4h-4zm-296 223h4v4h-4zm93 -198h4v4h-4zm232 -19h4v4h-4zm-312 62h4v4h-4zm332 -40h4v4h-4zm-132 551h4v4h-4zm223 -427h4v4h-4zm5 -250h4v4h-4zm65 55h4v4h-4zm-65 517h4v4h-4zm-374 -542h4v4h-4zm184 94h4v4h-4zm-101 265h4v4h-4zm-54 145h4v4h-4zm-126 -402h4v4h-4zm414 139h4v4h-4zm-249 80h4v4h-4zm-97 -19h4v4h-4zm167 306h4v4h-4zm277 -230h4v4h-4zm-556 -131h4v4h-4zm613 -139h4v4h-4zm-216 183h4v4h-4zm-334 67h4v4h-4zm4 -210h4v4h-4zm515 404h4v4h-4zm-257 -12h4v4h-4zm10 -536h4v4h-4zm237 803h4v4h-4zm-162 -90h4v4h-4zm-321 -506h4v4h-4zm347 109h4v4h-4zm89 248h4v4h-4zm-239 8h4v4h-4zm-333 -408h4v4h-4zm506 -206h4v4h-4zm-507 198h4v4h-4zm225 109h4v4h-4zm367 382h4v4h-4zm-526 -546h4v4h-4zm253 559h4v4h-4zm235 -697h4v4h-4zm-435 112h4v4h-4zm60 156h4v4h-4zm68 -222h4v4h-4zm10 569h4v4h-4zm15 93h4v4h-4zm163 103h4v4h-4zm206 -355h4v4h-4zm-179 -468h4v4h-4zm-50 591h4v4h-4zm114 -326h4v4h-4zm-460 -213h4v4h-4zm463 489h4v4h-4zm-92 -550h4v4h-4zm-235 423h4v4h-4zm275 -50h4v4h-4zm-335 40h4v4h-4zm55 -137h4v4h-4zm-18 343h4v4h-4zm6 -427h4v4h-4zm384 394h4v4h-4zm-86 158h4v4h-4zm-89 41h4v4h-4zm195 -517h4v4h-4zm-116 149h4v4h-4zm229 -97h4v4h-4zm-189 -211h4v4h-4zm-413 -85h4v4h-4zm-11 74h4v4h-4zm321 582h4v4h-4zm-327 -514h4v4h-4zm489 -3h4v4h-4zm-140 -130h4v4h-4zm96 3h4v4h-4zm72 442h4v4h-4zm-186 227h4v4h-4zm-407 -595h4v4h-4zm543 725h4v4h-4zm-349 -332h4v4h-4zm337 -146h4v4h-4zm-192 381h4v4h-4zm-189 -673h4v4h-4zm534 140h4v4h-4zm-150 497h4v4h-4zm19 -312h4v4h-4zm-53 -40h4v4h-4zm108 -271h4v4h-4zm-589 198h4v4h-4zm46 -88h4v4h-4zm537 230h4v4h-4zm-298 -416h4v4h-4zm325 556h4v4h-4zm-325 -481h4v4h-4zm18 593h4v4h-4zm-111 -145h4v4h-4zm-120 -93h4v4h-4zm190 59h4v4h-4zm3 -471h4v4h-4zm-65 336h4v4h-4zm310 364h4v4h-4zm41 -665h4v4h-4zm75 254h4v4h-4zm29 6h4v4h-4zm-2 505h4v4h-4zm-694 -697h4v4h-4zm258 380h4v4h-4zm281 -80h4v4h-4zm49 -58h4v4h-4zm-549 -266h4v4h-4zm223 589h4v4h-4zm33 -3h4v4h-4zm-28 -124h4v4h-4zm-116 -379h4v4h-4zm86 210h4v4h-4zm39 73h4v4h-4zm337 250h4v4h-4zm-9 -422h4v4h-4zm-24 530h4v4h-4zm174 -36h4v4h-4zm-24 41h4v4h-4zm-177 -198h4v4h-4zm-152 156h4v4h-4zm97 -443h4v4h-4zm-214 331h4v4h-4zm261 108h4v4h-4zm-158 -791h4v4h-4zm-131 486h4v4h-4zm98 -369h4v4h-4zm367 580h4v4h-4zm-313 103h4v4h-4zm139 -294h4v4h-4zm-477 -229h4v4h-4zm109 -7h4v4h-4zm344 296h4v4h-4zm6 40h4v4h-4zm-196 69h4v4h-4zm-209 -390h4v4h-4zm-108 -151h4v4h-4zm261 360h4v4h-4zm345 194h4v4h-4zm92 -456h4v4h-4zm-113 -124h4v4h-4zm25 141h4v4h-4zm-277 517h4v4h-4zm384 -538h4v4h-4zm-230 114h4v4h-4zm61 171h4v4h-4zm-114 116h4v4h-4zm53 -49h4v4h-4zm209 -288h4v4h-4zm-334 -301h4v4h-4zm188 753h4v4h-4zm-62 -295h4v4h-4zm155 234h4v4h-4zm90 107h4v4h-4zm-223 -317h4v4h-4zm-202 136h4v4h-4zm205 88h4v4h-4zm36 -192h4v4h-4zm41 280h4v4h-4zm-362 -735h4v4h-4zm198 702h4v4h-4zm-391 -451h4v4h-4zm205 122h4v4h-4zm442 -120h4v4h-4zm-15 -119h4v4h-4zm-384 227h4v4h-4zm-62 -365h4v4h-4zm-1 425h4v4h-4zm-177 -222h4v4h-4zm216 330h4v4h-4zm-2 85h4v4h-4zm50 -555h4v4h-4zm367 59h4v4h-4zm-190 203h4v4h-4zm-436 -256h4v4h-4zm605 195h4v4h-4zm-319 -242h4v4h-4zm-266 202h4v4h-4zm507 218h4v4h-4zm154 320h4v4h-4zm-608 -448h4v4h-4zm335 234h4v4h-4zm-381 -478h4v4h-4zm460 697h4v4h-4zm-399 -501h4v4h-4zm381 249h4v4h-4zm126 -327h4v4h-4zm18 -87h4v4h-4zm-121 420h4v4h-4zm-294 -110h4v4h-4zm285 20h4v4h-4zm80 199h4v4h-4zm-61 60h4v4h-4zm52 -332h4v4h-4zm62 26h4v4h-4zm-298 342h4v4h-4zm-112 -211h4v4h-4zm-141 -436h4v4h-4zm548 295h4v4h-4zm-131 -6h4v4h-4zm-451 -333h4v4h-4zm299 615h4v4h-4zm-376 -491h4v4h-4zm541 642h4v4h-4zm-59 -799h4v4h-4zm35 421h4v4h-4zm-272 -311h4v4h-4zm230 -87h4v4h-4zm131 411h4v4h-4zm-106 135h4v4h-4zm18 87h4v4h-4zm-536 -527h4v4h-4zm597 37h4v4h-4zm-426 -181h4v4h-4zm139 15h4v4h-4zm270 680h4v4h-4zm77 -233h4v4h-4zm-401 213h4v4h-4zm212 1h4v4h-4zm-410 -484h4v4h-4zm112 32h4v4h-4zm175 -195h4v4h-4zm289 635h4v4h-4zm29 -401h4v4h-4zm-697 -151h4v4h-4zm664 135h4v4h-4zm-9 -105h4v4h-4zm-365 -159h4v4h-4zm195 630h4v4h-4zm99 -244h4v4h-4zm-223 364h4v4h-4zm324 -297h4v4h-4zm-279 324h4v4h-4zm303 67h4v4h-4zm-5 -163h4v4h-4zm-483 -671h4v4h-4zm276 33h4v4h-4zm-165 649h4v4h-4zm-31 -114h4v4h-4zm232 54h4v4h-4zm-212 -84h4v4h-4zm414 260h4v4h-4zm-585 -561h4v4h-4zm363 458h4v4h-4zm-171 -121h4v4h-4zm-255 -433h4v4h-4zm181 176h4v4h-4zm168 -262h4v4h-4zm140 615h4v4h-4zm150 17h4v4h-4zm-158 -195h4v4h-4zm170 264h4v4h-4zm-559 -554h4v4h-4zm273 388h4v4h-4zm115 -137h4v4h-4zm157 -106h4v4h-4zm-144 -257h4v4h-4zm119 395h4v4h-4zm-528 -423h4v4h-4zm138 307h4v4h-4zm68 -382h4v4h-4zm199 296h4v4h-4zm70 22h4v4h-4zm-467 -50h4v4h-4zm231 -188h4v4h-4zm114 254h4v4h-4zm-404 41h4v4h-4zm500 -239h4v4h-4zm-372 35h4v4h-4zm441 181h4v4h-4zm-412 285h4v4h-4zm59 -604h4v4h-4zm211 257h4v4h-4zm-48 294h4v4h-4zm-221 -28h4v4h-4zm240 -567h4v4h-4zm66 770h4v4h-4zm-331 -751h4v4h-4zm276 610h4v4h-4zm161 -328h4v4h-4zm-12 402h4v4h-4zm-431 -231h4v4h-4zm377 165h4v4h-4zm-380 -524h4v4h-4zm233 27h4v4h-4zm157 582h4v4h-4zm-226 -78h4v4h-4zm-10 151h4v4h-4zm124 -236h4v4h-4zm-193 102h4v4h-4zm-179 -616h4v4h-4zm308 8h4v4h-4zm-12 74h4v4h-4zm-368 164h4v4h-4zm212 334h4v4h-4zm292 -29h4v4h-4zm-452 -433h4v4h-4zm588 669h4v4h-4zm-110 -175h4v4h-4zm-377 -205h4v4h-4zm259 248h4v4h-4zm-208 -170h4v4h-4zm-98 -429h4v4h-4zm160 354h4v4h-4zm358 -65h4v4h-4zm-373 224h4v4h-4zm283 -397h4v4h-4zm-13 467h4v4h-4zm123 188h4v4h-4zm-359 -214h4v4h-4zm69 84h4v4h-4zm-319 -349h4v4h-4zm434 347h4v4h-4zm45 -300h4v4h-4zm-395 56h4v4h-4zm339 236h4v4h-4z" fill="#fff"/>
<g fill="none">
<path d="M926 348 L942 338" stroke="#fff" stroke-width="2.5"/>
<path d="M942 338 L975 291 L1034 278 L1083 281 L1116 289 L1138 281 L1193 295 L1226 274 L1270 293 L1289 319 L1287 335 L1279 370 L1258 410 L1221 425 L1177 461 L1211 535 L1217 584 L1232 602 L1216 658 L1211 699 L1162 705 L1118 699 L1057 673 L1056 686 L1023 658 L1054 576 L1048 542 L958 427 L944 412 Z" stroke="#fff" stroke-width="2.6" stroke-linejoin="round" shape-rendering="auto"/>
<path d="M926.8 283.3 L1278.6 259.2 L1337.2 694.4 L985.7 719.2 Z M929.4 288.6 L1277.4 264.0 L1333.8 689.4 L987.7 713.6 Z M926.8 283.3 L929.4 288.6M1278.6 259.2 L1277.4 264.0M1337.2 694.4 L1333.8 689.4M985.7 719.2 L987.7 713.6" stroke="#ffff00" stroke-width="1.1" shape-rendering="crispEdges"/>
</g>
</svg><svg style="left:0;top:0" width="1610" height="909" viewBox="310 109 1610 909">
<path d="M1114.5 554V573M1105 564.5H1125" stroke="#d0d8dc" stroke-width="1"/>
<path d="M1132.5 637.5V652L1136 648.5L1139 655.5L1141.5 654.5L1138.5 647.5H1143Z" fill="#000" stroke="#fff" stroke-width="1.1" stroke-linejoin="round"/>
<path d="M1443 976.5H1823" stroke="#fff" stroke-width="1.5"/>
<path d="M1443.5 972V981M1822.5 972V981" stroke="#fff" stroke-width="1.2"/>
<text x="1623" y="1000" font-family="Liberation Sans" font-size="13" fill="#fff">6.5</text>
<path d="M1872 975.5L1897 973.5" stroke="#f00" stroke-width="2.5"/>
<path d="M1871 975L1867.5 951" stroke="#0d0" stroke-width="2.5"/>
<path d="M1872 974L1876 965" stroke="#2af" stroke-width="2.5"/>
<text x="1898" y="982" font-family="Liberation Sans" font-size="13" fill="#f00">X</text>
<text x="1862" y="948" font-family="Liberation Sans" font-size="11" fill="#0d0">Y</text>
<text x="1873" y="962" font-family="Liberation Sans" font-size="11" fill="#2af">Z</text>
</svg>
</div>
<div id="status"></div>
<div id="taskbar"><div style="left:0;top:0;width:1920px;height:1px;background:#2c2c2c"></div>
<svg style="left:0;top:0" width="1920" height="40" viewBox="0 1040 1920 40">
<!-- mint -->
<circle cx="18.5" cy="1061.5" r="14.5" fill="none" stroke="#d8d8d8" stroke-width="2.6"/>
<path d="M10 1053V1065Q10 1070 15 1070H23Q28 1070 28 1065V1058Q28 1055 25 1055Q22 1055 22 1058V1066M16 1066V1058Q16 1055 19 1055" fill="none" stroke="#d8d8d8" stroke-width="2.2"/>
<!-- firewall -->
<rect x="43" y="1047" width="28" height="28" rx="4" fill="#c8392b"/>
<g stroke="#f3d2c8" stroke-width="1"><path d="M43 1054H71M43 1061H71M43 1068H71M50 1047V1054M64 1047V1054M57 1054V1061M50 1061V1068M64 1061V1068M57 1068V1075"/></g>
<!-- red app -->
<rect x="81" y="1047" width="28" height="28" rx="4" fill="#d42121"/>
<g fill="#fff" transform="translate(95 1062)"><ellipse cx="0" cy="-5" rx="3.6" ry="6.5"/><ellipse cx="0" cy="-5" rx="3.6" ry="6.5" transform="rotate(120)"/><ellipse cx="0" cy="-5" rx="3.6" ry="6.5" transform="rotate(240)"/><circle r="4.5"/></g><circle cx="95" cy="1062" r="2.6" fill="#d42121"/>
<!-- folder -->
<rect x="124" y="1049" width="16" height="4" fill="#e8e8e8"/>
<rect x="118" y="1051" width="30" height="23" rx="2" fill="#8ab35a"/>
<!-- terminal -->
<rect x="156.5" y="1046.5" width="28" height="28" rx="4" fill="#1e1e1e" stroke="#111"/>
<text x="160" y="1057" font-family="Liberation Mono" font-size="8" fill="#eee">$_</text>
<!-- CC button -->
<rect x="190" y="1042" width="200" height="38" fill="#94b575"/>
<rect x="193" y="1053" width="16" height="16" fill="#cfdcc6"/>
<path d="M200 1056A4.5 4.5 0 1 0 200 1066" fill="none" stroke="#1e6a9c" stroke-width="1.6"/><path d="M206 1056.5A4.5 4.5 0 1 0 206 1065.5" fill="none" stroke="#1e6a9c" stroke-width="1.6"/>
<text x="218" y="1066" font-family="Liberation Sans" font-size="13.3" fill="#f4f4f4">CloudCompare v2.12.0 (K...</text>
<!-- tray -->
<path d="M1636 1045L1651 1050V1062Q1651 1071 1636 1077Q1621 1071 1621 1062V1050Z" fill="#dcdcdc"/>
<path d="M1636 1049L1647 1053V1062Q1647 1068 1636 1073Z" fill="#7a7a7a"/><path d="M1636 1049L1625 1053V1062Q1625 1068 1636 1073Z" fill="#c4c4c4"/>
<circle cx="1645.5" cy="1071" r="5.3" fill="#f07a28"/>
<rect x="1660" y="1047" width="28" height="27" rx="4" fill="#d8d8d8"/>
<path d="M1665 1071V1057Q1665 1053 1669 1053H1671V1051H1677V1053H1679Q1683 1053 1683 1057V1071Z" fill="#3a3a3a"/><rect x="1669" y="1069" width="10" height="1.5" fill="#777"/>
<rect x="1707" y="1050" width="20" height="21" fill="#d8d8d8"/>
<path d="M1697 1061Q1708 1048 1721 1056Q1717 1069 1708 1066Q1701 1066 1697 1061Z" fill="none" stroke="#d8d8d8" stroke-width="2"/>
<ellipse cx="1712" cy="1060" rx="6" ry="4" fill="none" stroke="#555" stroke-width="1.5"/>
<text x="1733" y="1066" font-family="Liberation Sans" font-size="13.3" fill="#d6d6d6" textLength="34" lengthAdjust="spacingAndGlyphs">18:55</text>
<rect x="1777" y="1044" width="8" height="33" rx="2" fill="#fff"/>
<rect x="1795" y="1044" width="8" height="33" rx="2" fill="#fff"/><rect x="1796" y="1075" width="6" height="1" fill="#22c"/>
<g fill="#8db35b"><rect x="1810" y="1049" width="30" height="24"/><rect x="1848" y="1049" width="30" height="24"/><rect x="1886" y="1049" width="30" height="24"/></g>
<g fill="#6f9a45"><rect x="1810" y="1049" width="30" height="4"/><rect x="1848" y="1049" width="30" height="4"/><rect x="1886" y="1049" width="30" height="4"/></g>
<g fill="#fff"><rect x="1813" y="1050" width="1.5" height="1.5"/><rect x="1851" y="1050" width="1.5" height="1.5"/><rect x="1889" y="1050" width="1.5" height="1.5"/></g>
</svg>
</div>
</body></html>
